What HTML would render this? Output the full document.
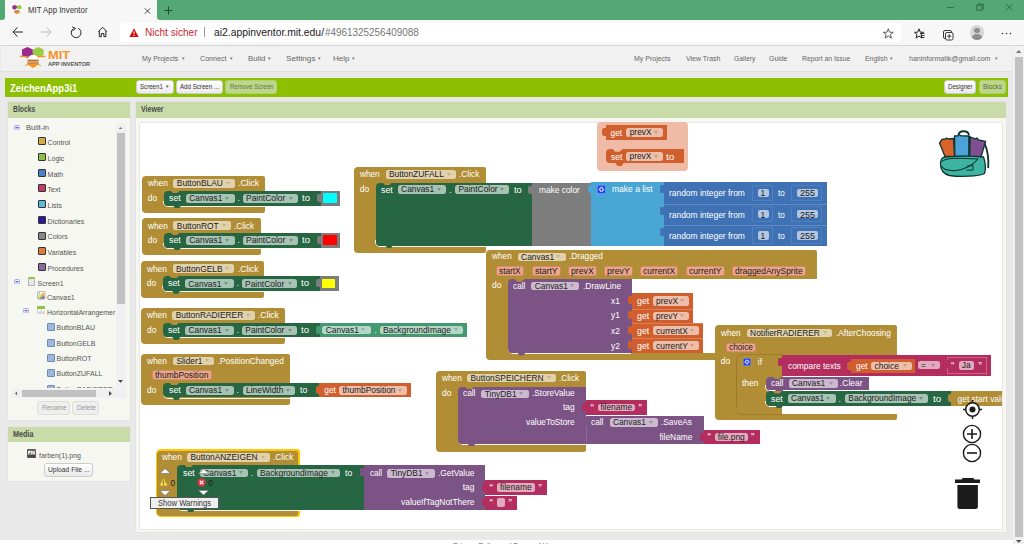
<!DOCTYPE html>
<html><head><meta charset="utf-8"><title>MIT App Inventor</title>
<style>
html,body{margin:0;padding:0;}
body{width:1024px;height:544px;overflow:hidden;position:relative;font-family:"Liberation Sans",sans-serif;background:#fff;}
body div, body svg{position:absolute;box-sizing:border-box;}
</style></head><body>
<div style="left:0;top:0;width:1024px;height:544px;background:#fff"></div>
<div style="left:0px;top:0px;width:1024px;height:45.5px;background:#f7f7f7;"></div>
<div style="left:0px;top:0px;width:5px;height:20px;background:#54a873;border-radius:0 0 3px 0;"></div>
<div style="left:157px;top:0px;width:867px;height:20px;background:#54a873;border-radius:0 0 0 3px;"></div>
<svg style="left:10.5px;top:4.3px;width:12px;height:11px" viewBox="0 0 28 23"><path d="M8.4 1 L13.8 3.6 L13.8 9.4 L8.4 12 L3 9.4 L3 3.6 Z" fill="#9a2a8c"/><path d="M19.3 1 L24.6 3.6 L24.6 9 L19.3 11.4 L14 9 L14 3.6 Z" fill="#9ccb45"/><path d="M9 13.6 Q9 9 14 9 Q19.4 9 19.4 13.6 Z" fill="#eee"/><rect x="8.5" y="13.6" width="11" height="4.3" fill="#a7754b"/><path d="M5 17.9 H23 L14 22.5 Z" fill="#f7931e"/></svg>
<div style="left:28.0px;top:4.6px;height:10.8px;line-height:10.8px;font-size:8.3px;color:#333;white-space:nowrap;transform:scaleX(0.944);transform-origin:0 50%;">MIT App Inventor</div>
<svg style="left:144px;top:7.5px;width:7px;height:6px" viewBox="0 0 7 6"><path d="M0.8 0.3 L6.2 5.7 M6.2 0.3 L0.8 5.7" stroke="#333" stroke-width="0.9"/></svg>
<svg style="left:163.5px;top:6px;width:9px;height:9px" viewBox="0 0 9 9"><path d="M4.5 0.5 V8.5 M0.5 4.5 H8.5" stroke="#1f4d2e" stroke-width="1"/></svg>
<svg style="left:940px;top:0px;width:80px;height:16px" viewBox="0 0 80 16"><path d="M7 7.4 H13.8" stroke="#2c6a41" stroke-width="0.9"/><rect x="36.8" y="5.2" width="5.2" height="5" fill="none" stroke="#2c6a41" stroke-width="0.9"/><path d="M38.2 5.2 V4 H43.2 V9 H42" fill="none" stroke="#2c6a41" stroke-width="0.9"/><path d="M66.2 4.2 L72.4 10.2 M72.4 4.2 L66.2 10.2" stroke="#2c6a41" stroke-width="0.9"/></svg>
<div style="left:120px;top:22.5px;width:781px;height:19.5px;background:#fff;border-radius:4px;"></div>
<div style="left:0px;top:44.75px;width:1024px;height:1.25px;background:#d4d4d4;"></div>
<svg style="left:10px;top:25px;width:100px;height:14px" viewBox="0 0 100 14"><path d="M3 7 H13 M7.5 2.3 L3 7 L7.5 11.7" fill="none" stroke="#222" stroke-width="1"/><path d="M31 7 H41 M36.5 2.3 L41 7 L36.5 11.7" fill="none" stroke="#bdbdbd" stroke-width="1"/><path d="M63.5 3.6 A4.9 4.9 0 1 0 68.2 3.3" fill="none" stroke="#222" stroke-width="1"/><path d="M62.2 1.8 L65.6 3.4 L62.6 5.8" fill="none" stroke="#222" stroke-width="1"/><path d="M88.3 6.6 L92.6 2.3 L96.9 6.6 M89.3 5.8 V11.7 H91.3 V8.6 H93.9 V11.7 H95.9 V5.8" fill="none" stroke="#222" stroke-width="1"/></svg>
<svg style="left:129px;top:27.5px;width:10px;height:9.5px" viewBox="0 0 10 9.5"><path d="M5 0.3 L9.8 9.3 H0.2 Z" fill="#d50b0b"/><rect x="4.5" y="3.3" width="1" height="3" fill="#fff"/><rect x="4.5" y="7" width="1" height="1" fill="#fff"/></svg>
<div style="left:145.0px;top:26.3px;height:13.0px;line-height:13.0px;font-size:10px;color:#c9262f;white-space:nowrap;transform:scaleX(1.005);transform-origin:0 50%;">Nicht sicher</div>
<div style="left:204px;top:27px;width:1px;height:10px;background:#999;"></div>
<div style="left:213.5px;top:26.3px;height:13.0px;line-height:13.0px;font-size:10px;color:#222;white-space:nowrap;transform:scaleX(1.036);transform-origin:0 50%;">ai2.appinventor.mit.edu/</div>
<div style="left:324.8px;top:26.3px;height:13.0px;line-height:13.0px;font-size:10px;color:#767676;white-space:nowrap;transform:scaleX(0.991);transform-origin:0 50%;">#4961325256409088</div>
<svg style="left:883px;top:27.5px;width:130px;height:13px" viewBox="0 0 130 13"><path d="M5.3 0.8 L6.6 4.2 L10.2 4.3 L7.4 6.6 L8.4 10.1 L5.3 8.1 L2.2 10.1 L3.2 6.6 L0.4 4.3 L4 4.2 Z" fill="none" stroke="#333" stroke-width="0.8" stroke-linejoin="round"/><path d="M36 0.8 L37.3 4.2 L40.5 4.3 L38 6.6 L39 10.1 L36 8.1 L33 10.1 L34 6.6 L31.5 4.3 L34.7 4.2 Z" fill="none" stroke="#222" stroke-width="1" stroke-linejoin="round"/><path d="M37 5.5 H41.5 M38 7.5 H41.5 M38.5 9.5 H41.5" stroke="#222" stroke-width="0.9"/><rect x="60.5" y="2.5" width="8" height="8" rx="1.5" fill="none" stroke="#222" stroke-width="0.9"/><rect x="62.5" y="4.5" width="7.5" height="7.5" rx="1.5" fill="#fff" stroke="#222" stroke-width="0.9"/><path d="M66.2 6 V10.5 M64 8.2 H68.4" stroke="#222" stroke-width="0.9"/><circle cx="119.5" cy="5.5" r="0.8" fill="#333"/><circle cx="123.5" cy="5.5" r="0.8" fill="#333"/><circle cx="127.5" cy="5.5" r="0.8" fill="#333"/></svg>
<div style="left:969.5px;top:25.4px;width:14.5px;height:14.5px;background:#d7d7d7;border-radius:50%;overflow:hidden"><div style="left:4.5px;top:2.5px;width:5.5px;height:5.5px;background:#8d8d8d;border-radius:50%"></div><div style="left:2.3px;top:8.6px;width:10px;height:7px;background:#8d8d8d;border-radius:50%"></div></div>
<div style="left:0px;top:46px;width:1013px;height:493.75px;background:#e9e9e9;"></div>
<div style="left:1013px;top:46px;width:11px;height:498px;background:#f1f1f1;"></div>
<div style="left:1014.5px;top:57px;width:8.5px;height:479.5px;background:#c1c1c1;"></div>
<svg style="left:1015.95px;top:49.50px;width:5.5px;height:3px" viewBox="0 0 5.5 3"><polygon points="0,3 2.75,0 5.5,3" fill="#777"/></svg>
<svg style="left:1015.95px;top:539.50px;width:5.5px;height:3px" viewBox="0 0 5.5 3"><polygon points="0,0 2.75,3 5.5,0" fill="#555"/></svg>
<div style="left:1px;top:46px;width:1011px;height:26px;background:#f1f1f1;border-bottom:1px solid #e0e0e0;"></div>
<svg style="left:19px;top:46px;width:28px;height:23px" viewBox="0 0 28 23"><path d="M8.4 1 L13.8 3.6 L13.8 9.4 L8.4 12 L3 9.4 L3 3.6 Z" fill="#9a2a8c"/><path d="M19.3 1 L24.6 3.6 L24.6 9 L19.3 11.4 L14 9 L14 3.6 Z" fill="#9ccb45"/><path d="M1 10.5 Q4 10 9 11 M18 11 Q23 10 26.5 10.5" stroke="#f7931e" stroke-width="1.3" fill="none"/><path d="M9 13.6 Q9 9 14 9 Q19.4 9 19.4 13.6 Z" fill="#fff"/><rect x="8.5" y="13.6" width="11" height="1.5" fill="#a7754b"/><rect x="8.5" y="15.1" width="11" height="1.3" fill="#f39a3c"/><rect x="8.5" y="16.4" width="11" height="1.5" fill="#a7754b"/><path d="M8.5 17.9 H19.5 L14 21.5 Z M6 20 L9 18 M22 20 L19 18" fill="#f7931e" stroke="#f7931e" stroke-width="1"/></svg>
<div style="left:47.8px;top:47.7px;height:14.7px;line-height:14.7px;font-size:11.3px;color:#f7931e;white-space:nowrap;font-weight:bold;transform:scaleX(1.141);transform-origin:0 50%;">MIT</div>
<div style="left:47.8px;top:60.2px;height:8.1px;line-height:8.1px;font-size:6.2px;color:#555;white-space:nowrap;font-weight:bold;transform:scaleX(0.912);transform-origin:0 50%;">APP INVENTOR</div>
<div style="left:141.6px;top:54.3px;height:9.4px;line-height:9.4px;font-size:7.2px;color:#666;white-space:nowrap;transform:scaleX(0.968);transform-origin:0 50%;">My Projects</div>
<div style="left:181.8px;top:56.1px;height:5.9px;line-height:5.9px;font-size:4.5px;color:#777;white-space:nowrap;">▾</div>
<div style="left:200.0px;top:54.3px;height:9.4px;line-height:9.4px;font-size:7.2px;color:#666;white-space:nowrap;transform:scaleX(0.988);transform-origin:0 50%;">Connect</div>
<div style="left:229.8px;top:56.1px;height:5.9px;line-height:5.9px;font-size:4.5px;color:#777;white-space:nowrap;">▾</div>
<div style="left:247.5px;top:54.3px;height:9.4px;line-height:9.4px;font-size:7.2px;color:#666;white-space:nowrap;transform:scaleX(1.093);transform-origin:0 50%;">Build</div>
<div style="left:268.3px;top:56.1px;height:5.9px;line-height:5.9px;font-size:4.5px;color:#777;white-space:nowrap;">▾</div>
<div style="left:285.5px;top:54.3px;height:9.4px;line-height:9.4px;font-size:7.2px;color:#666;white-space:nowrap;transform:scaleX(1.134);transform-origin:0 50%;">Settings</div>
<div style="left:318.3px;top:56.1px;height:5.9px;line-height:5.9px;font-size:4.5px;color:#777;white-space:nowrap;">▾</div>
<div style="left:332.5px;top:54.3px;height:9.4px;line-height:9.4px;font-size:7.2px;color:#666;white-space:nowrap;transform:scaleX(1.114);transform-origin:0 50%;">Help</div>
<div style="left:352.3px;top:56.1px;height:5.9px;line-height:5.9px;font-size:4.5px;color:#777;white-space:nowrap;">▾</div>
<div style="left:634.0px;top:53.8px;height:9.4px;line-height:9.4px;font-size:7.2px;color:#666;white-space:nowrap;transform:scaleX(0.973);transform-origin:0 50%;">My Projects</div>
<div style="left:685.5px;top:53.8px;height:9.4px;line-height:9.4px;font-size:7.2px;color:#666;white-space:nowrap;transform:scaleX(0.972);transform-origin:0 50%;">View Trash</div>
<div style="left:733.5px;top:53.8px;height:9.4px;line-height:9.4px;font-size:7.2px;color:#666;white-space:nowrap;transform:scaleX(0.943);transform-origin:0 50%;">Gallery</div>
<div style="left:769.0px;top:53.8px;height:9.4px;line-height:9.4px;font-size:7.2px;color:#666;white-space:nowrap;transform:scaleX(0.963);transform-origin:0 50%;">Guide</div>
<div style="left:801.6px;top:53.8px;height:9.4px;line-height:9.4px;font-size:7.2px;color:#666;white-space:nowrap;transform:scaleX(0.952);transform-origin:0 50%;">Report an Issue</div>
<div style="left:864.5px;top:54.3px;height:9.4px;line-height:9.4px;font-size:7.2px;color:#666;white-space:nowrap;transform:scaleX(0.953);transform-origin:0 50%;">English</div>
<div style="left:890.3px;top:56.1px;height:5.9px;line-height:5.9px;font-size:4.5px;color:#777;white-space:nowrap;">▾</div>
<div style="left:909.4px;top:54.3px;height:9.4px;line-height:9.4px;font-size:7.2px;color:#666;white-space:nowrap;transform:scaleX(0.979);transform-origin:0 50%;">haninformatik@gmail.com</div>
<div style="left:994.8px;top:56.1px;height:5.9px;line-height:5.9px;font-size:4.5px;color:#777;white-space:nowrap;">▾</div>
<div style="left:4.5px;top:78px;width:1003.5px;height:18.5px;background:#8cc000;"></div>
<div style="left:9.6px;top:81.5px;height:13.7px;line-height:13.7px;font-size:10.5px;color:#fff;white-space:nowrap;font-weight:bold;transform:scaleX(0.901);transform-origin:0 50%;">ZeichenApp3i1</div>
<div style="left:135.7px;top:80.2px;width:38.10000000000002px;height:14.099999999999994px;background:linear-gradient(#fff,#eaeaea);border-radius:3px;box-sizing:border-box;border:1px solid #ccc"></div>
<div style="left:139.8px;top:82.2px;height:9.1px;line-height:9.1px;font-size:7px;color:#333;white-space:nowrap;transform:scaleX(0.875);transform-origin:0 50%;">Screen1</div>
<div style="left:165.8px;top:83.9px;height:5.9px;line-height:5.9px;font-size:4.5px;color:#555;white-space:nowrap;">▾</div>
<div style="left:176px;top:80.2px;width:47px;height:14.099999999999994px;background:linear-gradient(#fff,#eaeaea);border-radius:3px;box-sizing:border-box;border:1px solid #ccc"></div>
<div style="left:180.0px;top:82.2px;height:9.1px;line-height:9.1px;font-size:7px;color:#333;white-space:nowrap;transform:scaleX(0.879);transform-origin:0 50%;">Add Screen ...</div>
<div style="left:225px;top:80.2px;width:52px;height:14.099999999999994px;background:#bcd68a;border-radius:3px;box-sizing:border-box;border:1px solid #b2cd7c"></div>
<div style="left:229.6px;top:82.2px;height:9.1px;line-height:9.1px;font-size:7px;color:#637449;white-space:nowrap;transform:scaleX(0.865);transform-origin:0 50%;">Remove Screen</div>
<div style="left:943.5px;top:80px;width:32.5px;height:14px;background:linear-gradient(#fff,#eaeaea);border-radius:3px;box-sizing:border-box;border:1px solid #ccc"></div>
<div style="left:947.5px;top:82.0px;height:9.1px;line-height:9.1px;font-size:7px;color:#333;white-space:nowrap;transform:scaleX(0.875);transform-origin:0 50%;">Designer</div>
<div style="left:979px;top:80px;width:27px;height:14px;background:#bcd68a;border-radius:3px;box-sizing:border-box;border:1px solid #b2cd7c"></div>
<div style="left:983.0px;top:82.0px;height:9.1px;line-height:9.1px;font-size:7px;color:#5b6b44;white-space:nowrap;transform:scaleX(0.922);transform-origin:0 50%;">Blocks</div>
<div style="left:7.5px;top:101.5px;width:122.5px;height:318.5px;background:#f6f7f0;box-shadow:0 0 1px #ccc;"></div>
<div style="left:7.5px;top:101.5px;width:122.5px;height:16.5px;background:#c9dba9;"></div>
<div style="left:12.9px;top:103.8px;height:11.2px;line-height:11.2px;font-size:8.6px;color:#4a4a4a;white-space:nowrap;font-weight:bold;transform:scaleX(0.787);transform-origin:0 50%;">Blocks</div>
<svg style="left:14.2px;top:124.8px;width:6px;height:5.5px" viewBox="0 0 6 5.5"><rect x="0.5" y="0.5" width="5" height="4.5" rx="1.3" fill="#f3f3ff" stroke="#a2a2dc" stroke-width="0.9"/><path d="M1.6 2.75 H4.4" stroke="#3535c8" stroke-width="1"/></svg>
<div style="left:25.9px;top:123.0px;height:9.6px;line-height:9.6px;font-size:7.4px;color:#555;white-space:nowrap;transform:scaleX(1.021);transform-origin:0 50%;">Built-in</div>
<div style="left:37.6px;top:137.3px;width:8px;height:8px;background:#d4ac45;border:1px solid #333;border-radius:1px"></div>
<div style="left:47.6px;top:138.2px;height:9.1px;line-height:9.1px;font-size:7px;color:#555;white-space:nowrap;">Control</div>
<div style="left:37.6px;top:153.0px;width:8px;height:8px;background:#8bbf4b;border:1px solid #333;border-radius:1px"></div>
<div style="left:47.6px;top:153.9px;height:9.1px;line-height:9.1px;font-size:7px;color:#555;white-space:nowrap;">Logic</div>
<div style="left:37.6px;top:168.7px;width:8px;height:8px;background:#4a80c8;border:1px solid #333;border-radius:1px"></div>
<div style="left:47.6px;top:169.7px;height:9.1px;line-height:9.1px;font-size:7px;color:#555;white-space:nowrap;">Math</div>
<div style="left:37.6px;top:184.4px;width:8px;height:8px;background:#c03a6a;border:1px solid #333;border-radius:1px"></div>
<div style="left:47.6px;top:185.3px;height:9.1px;line-height:9.1px;font-size:7px;color:#555;white-space:nowrap;">Text</div>
<div style="left:37.6px;top:200.1px;width:8px;height:8px;background:#5ab8e0;border:1px solid #333;border-radius:1px"></div>
<div style="left:47.6px;top:201.1px;height:9.1px;line-height:9.1px;font-size:7px;color:#555;white-space:nowrap;">Lists</div>
<div style="left:37.6px;top:215.8px;width:8px;height:8px;background:#2b1a9c;border:1px solid #333;border-radius:1px"></div>
<div style="left:47.6px;top:216.8px;height:9.1px;line-height:9.1px;font-size:7px;color:#555;white-space:nowrap;">Dictionaries</div>
<div style="left:37.6px;top:231.5px;width:8px;height:8px;background:#888888;border:1px solid #333;border-radius:1px"></div>
<div style="left:47.6px;top:232.4px;height:9.1px;line-height:9.1px;font-size:7px;color:#555;white-space:nowrap;">Colors</div>
<div style="left:37.6px;top:247.2px;width:8px;height:8px;background:#e07a3a;border:1px solid #333;border-radius:1px"></div>
<div style="left:47.6px;top:248.1px;height:9.1px;line-height:9.1px;font-size:7px;color:#555;white-space:nowrap;">Variables</div>
<div style="left:37.6px;top:262.9px;width:8px;height:8px;background:#8b66a0;border:1px solid #333;border-radius:1px"></div>
<div style="left:47.6px;top:263.8px;height:9.1px;line-height:9.1px;font-size:7px;color:#555;white-space:nowrap;">Procedures</div>
<div style="left:115.5px;top:123px;width:10.25px;height:265px;background:#f0f0f0;"></div>
<div style="left:116.5px;top:133px;width:8.5px;height:171px;background:#c1c1c1;"></div>
<svg style="left:118.30px;top:126.60px;width:5px;height:2.8px" viewBox="0 0 5 2.8"><polygon points="0,2.8 2.5,0 5,2.8" fill="#777"/></svg>
<svg style="left:118.30px;top:380.40px;width:5px;height:2.8px" viewBox="0 0 5 2.8"><polygon points="0,0 2.5,2.8 5,0" fill="#444"/></svg>
<svg style="left:14px;top:278.9px;width:6px;height:5.5px" viewBox="0 0 6 5.5"><rect x="0.5" y="0.5" width="5" height="4.5" rx="1.3" fill="#f3f3ff" stroke="#a2a2dc" stroke-width="0.9"/><path d="M1.6 2.75 H4.4" stroke="#3535c8" stroke-width="1"/></svg>
<div style="left:28.25px;top:276.75px;width:6.75px;height:9px;background:#e8e8e8;border:1px solid #b5b5b5;box-sizing:border-box;border-top:2px solid #8cc63f;border-radius:1px"></div>
<div style="left:37.5px;top:278.9px;height:9.1px;line-height:9.1px;font-size:7px;color:#555;white-space:nowrap;">Screen1</div>
<svg style="left:37.3px;top:291.4px;width:8.3px;height:8.5px" viewBox="0 0 8.3 8.5"><rect x="0.4" y="0.4" width="7.5" height="7.7" rx="1" fill="#fff" stroke="#9aa" stroke-width="0.8"/><path d="M1 7.5 C3 7 3 2 7.5 1.5 V7.5 Z" fill="#f3b54a"/><path d="M1 7.8 C4 7.5 5 5.5 7.5 5 V7.8 Z" fill="#4a7fc8"/><path d="M2.5 1 C2.5 3 2 5 1.2 6.5" stroke="#8cc63f" stroke-width="0.9" fill="none"/></svg>
<div style="left:47.0px;top:293.1px;height:9.1px;line-height:9.1px;font-size:7px;color:#555;white-space:nowrap;">Canvas1</div>
<svg style="left:23.3px;top:307.8px;width:6px;height:5.5px" viewBox="0 0 6 5.5"><rect x="0.5" y="0.5" width="5" height="4.5" rx="1.3" fill="#f3f3ff" stroke="#a2a2dc" stroke-width="0.9"/><path d="M1.6 2.75 H4.4" stroke="#3535c8" stroke-width="1"/></svg>
<svg style="left:36.5px;top:306.2px;width:8.7px;height:8.3px" viewBox="0 0 8.7 8.3"><rect x="0" y="0" width="8.7" height="8.3" rx="1" fill="#d8d8d8"/><rect x="0" y="0" width="8.7" height="3.6" rx="1" fill="#8cc63f"/><rect x="1.2" y="3" width="2.6" height="2.4" fill="#fff"/><rect x="4.9" y="3" width="2.6" height="2.4" fill="#fff"/></svg>
<div style="left:46.5px;top:307.6px;height:9.1px;line-height:9.1px;font-size:7px;color:#555;white-space:nowrap;transform:scaleX(0.996);transform-origin:0 50%;">HorizontalArrangemer</div>
<div style="left:46.5px;top:323px;width:8.25px;height:8px;background:#9db8db;border:1px solid #6a8bb8;box-sizing:border-box;border-radius:1px"></div>
<div style="left:56.5px;top:323.2px;height:9.1px;line-height:9.1px;font-size:7px;color:#555;white-space:nowrap;">ButtonBLAU</div>
<div style="left:46.5px;top:338.5px;width:8.25px;height:8px;background:#9db8db;border:1px solid #6a8bb8;box-sizing:border-box;border-radius:1px"></div>
<div style="left:56.5px;top:338.6px;height:9.1px;line-height:9.1px;font-size:7px;color:#555;white-space:nowrap;">ButtonGELB</div>
<div style="left:46.5px;top:353.75px;width:8.25px;height:8px;background:#9db8db;border:1px solid #6a8bb8;box-sizing:border-box;border-radius:1px"></div>
<div style="left:56.5px;top:354.1px;height:9.1px;line-height:9.1px;font-size:7px;color:#555;white-space:nowrap;">ButtonROT</div>
<div style="left:46.5px;top:369.25px;width:8.25px;height:8px;background:#9db8db;border:1px solid #6a8bb8;box-sizing:border-box;border-radius:1px"></div>
<div style="left:56.5px;top:369.4px;height:9.1px;line-height:9.1px;font-size:7px;color:#555;white-space:nowrap;">ButtonZUFALL</div>
<div style="left:40px;top:378px;width:75px;height:9.6px;overflow:hidden">
<div style="left:-40px;top:-378px;width:200px;height:400px">
<div style="left:46.5px;top:384.5px;width:8.25px;height:8px;background:#9db8db;border:1px solid #6a8bb8;box-sizing:border-box;border-radius:1px"></div>
<div style="left:56.5px;top:384.8px;height:9.1px;line-height:9.1px;font-size:7px;color:#555;white-space:nowrap;">ButtonRADIERER</div>
</div></div>
<div style="left:11px;top:388.5px;width:115px;height:9.5px;background:#f0f0f0;"></div>
<div style="left:22px;top:389.5px;width:73.5px;height:7.5px;background:#c1c1c1;"></div>
<svg style="left:14.60px;top:390.80px;width:2.8px;height:5px" viewBox="0 0 2.8 5"><polygon points="2.8,0 0,2.5 2.8,5" fill="#555"/></svg>
<svg style="left:108.90px;top:390.80px;width:2.8px;height:5px" viewBox="0 0 2.8 5"><polygon points="0,0 2.8,2.5 0,5" fill="#444"/></svg>
<div style="left:37.4px;top:401px;width:32.6px;height:13.699999999999989px;background:#efefef;border-radius:3px;box-sizing:border-box;border:1px solid #ddd"></div>
<div style="left:41.5px;top:402.8px;height:9.1px;line-height:9.1px;font-size:7px;color:#999;white-space:nowrap;transform:scaleX(0.926);transform-origin:0 50%;">Rename</div>
<div style="left:72.4px;top:401px;width:27.0px;height:13.699999999999989px;background:#efefef;border-radius:3px;box-sizing:border-box;border:1px solid #ddd"></div>
<div style="left:76.5px;top:402.8px;height:9.1px;line-height:9.1px;font-size:7px;color:#999;white-space:nowrap;transform:scaleX(0.939);transform-origin:0 50%;">Delete</div>
<div style="left:8px;top:426.5px;width:122px;height:54px;background:#f6f7f0;box-shadow:0 0 1px #ccc;"></div>
<div style="left:8px;top:426.5px;width:122px;height:15.75px;background:#c9dba9;"></div>
<div style="left:12.8px;top:429.0px;height:11.2px;line-height:11.2px;font-size:8.6px;color:#4a4a4a;white-space:nowrap;font-weight:bold;transform:scaleX(0.845);transform-origin:0 50%;">Media</div>
<svg style="left:27.4px;top:448.5px;width:9.1px;height:9.1px" viewBox="0 0 9 9"><rect x="0" y="0" width="9" height="9" rx="1" fill="#555"/><rect x="0.8" y="0.8" width="7.4" height="7.4" fill="#777"/><path d="M1.2 2 H3.6 V3.8 H2.2 V5.5 H1.2 Z M4.2 2 H5 L6.5 4 V2 H7.6 V5.5 H6.8 L5.2 3.5 V5.5 H4.2 Z" fill="#fff"/><rect x="0.8" y="6" width="7.4" height="2.2" fill="#444"/></svg>
<div style="left:39.0px;top:450.9px;height:9.4px;line-height:9.4px;font-size:7.2px;color:#555;white-space:nowrap;transform:scaleX(0.972);transform-origin:0 50%;">farben(1).png</div>
<div style="left:43.8px;top:463.3px;width:49.2px;height:13.699999999999989px;background:linear-gradient(#fff,#eaeaea);border-radius:3px;box-sizing:border-box;border:1px solid #ccc"></div>
<div style="left:47.8px;top:465.1px;height:9.1px;line-height:9.1px;font-size:7px;color:#333;white-space:nowrap;transform:scaleX(0.961);transform-origin:0 50%;">Upload File ...</div>
<div style="left:135.5px;top:101.5px;width:870px;height:430.75px;background:#f6f7f0;box-shadow:0 0 1px #ccc;"></div>
<div style="left:135.5px;top:101.5px;width:870px;height:16.5px;background:#c9dba9;"></div>
<div style="left:140.7px;top:103.8px;height:11.2px;line-height:11.2px;font-size:8.6px;color:#4a4a4a;white-space:nowrap;font-weight:bold;transform:scaleX(0.820);transform-origin:0 50%;">Viewer</div>
<div style="left:139.5px;top:122.5px;width:862px;height:406px;background:#fff;box-shadow:0 0 0 0.7px #e3e3de;"></div>
<div style="left:452.5px;top:541.4px;height:10.4px;line-height:10.4px;font-size:8px;color:#666;white-space:nowrap;transform:scaleX(0.895);transform-origin:0 50%;">Privacy Policy and Terms of Use</div>
<div style="left:139px;top:122px;width:863px;height:406px;overflow:hidden">
<div style="left:-139px;top:-122px;width:1024px;height:544px;">
<div style="left:142px;top:175.5px;width:122.75px;height:15.5px;background:#b18e35;border-radius:4px 2px 0 0;"></div>
<div style="left:142px;top:190.5px;width:25.5px;height:15.5px;background:#b18e35;"></div>
<div style="left:142px;top:205.5px;width:122.75px;height:7.25px;background:#b18e35;border-radius:0 0 2px 4px;"></div>
<div style="left:147.8px;top:177.9px;height:10.9px;line-height:10.9px;font-size:8.4px;color:#fff;white-space:nowrap;transform:scaleX(0.991);transform-origin:0 50%;">when</div>
<div style="left:173.25px;top:178.5px;width:61.5px;height:9px;background:#e0d2ae;border-radius:2.5px;"></div>
<div style="left:176.8px;top:177.8px;height:10.9px;line-height:10.9px;font-size:8.4px;color:#222;white-space:nowrap;">ButtonBLAU</div>
<div style="left:225.8px;top:181.5px;width:0;height:0;border-left:2px solid transparent;border-right:2px solid transparent;border-top:3px solid #b18e35;opacity:.45"></div>
<div style="left:237.9px;top:177.9px;height:10.9px;line-height:10.9px;font-size:8.4px;color:#fff;white-space:nowrap;transform:scaleX(1.028);transform-origin:0 50%;">.Click</div>
<div style="left:147.8px;top:192.5px;height:10.9px;line-height:10.9px;font-size:8.4px;color:#fff;white-space:nowrap;">do</div>
<div style="left:163.3px;top:200.5px;width:157.2px;height:6.3px;border-left:1px solid rgba(255,255,255,.85);border-bottom:1.2px solid rgba(255,255,255,.9);border-bottom-left-radius:5px;"></div>
<div style="left:163.5px;top:190.5px;width:157px;height:15px;background:#266643;border-radius:4px 0 0 4px;"></div>
<div style="left:170.1px;top:190.3px;width:10px;height:2.6px;background:#b18e35;clip-path:polygon(0 0,100% 0,72% 100%,28% 100%)"></div>
<div style="left:173.1px;top:205.2px;width:8px;height:3px;background:#266643;clip-path:polygon(0 0,100% 0,75% 100%,25% 100%)"></div>
<div style="left:169.2px;top:192.7px;height:10.9px;line-height:10.9px;font-size:8.4px;color:#fff;white-space:nowrap;transform:scaleX(1.053);transform-origin:0 50%;">set</div>
<div style="left:185.75px;top:193.5px;width:48.75px;height:9.25px;background:#a8c2b4;border-radius:2.5px;"></div>
<div style="left:189.3px;top:193.0px;height:10.9px;line-height:10.9px;font-size:8.4px;color:#222;white-space:nowrap;">Canvas1</div>
<div style="left:225.4px;top:196.7px;width:0;height:0;border-left:2px solid transparent;border-right:2px solid transparent;border-top:3px solid #266643;opacity:.45"></div>
<div style="left:237.6px;top:192.7px;height:10.9px;line-height:10.9px;font-size:8.4px;color:#fff;white-space:nowrap;">.</div>
<div style="left:242.5px;top:193.5px;width:55px;height:9.25px;background:#a8c2b4;border-radius:2.5px;"></div>
<div style="left:246.1px;top:193.0px;height:10.9px;line-height:10.9px;font-size:8.4px;color:#222;white-space:nowrap;">PaintColor</div>
<div style="left:288.6px;top:196.7px;width:0;height:0;border-left:2px solid transparent;border-right:2px solid transparent;border-top:3px solid #266643;opacity:.45"></div>
<div style="left:302.0px;top:192.7px;height:10.9px;line-height:10.9px;font-size:8.4px;color:#fff;white-space:nowrap;transform:scaleX(1.142);transform-origin:0 50%;">to</div>
<div style="left:320.5px;top:190.5px;width:19.5px;height:15px;background:#7d7d7d;"></div>
<div style="left:317.0px;top:193.5px;width:4px;height:8px;background:#7d7d7d;border-radius:2px 0 0 2px;"></div>
<div style="left:323.25px;top:193.25px;width:13.25px;height:9.5px;background:#00ffff;border-radius:0.5px"></div>
<div style="left:142px;top:218.25px;width:118.5px;height:14.75px;background:#b18e35;border-radius:4px 2px 0 0;"></div>
<div style="left:142px;top:232.5px;width:25.5px;height:15.5px;background:#b18e35;"></div>
<div style="left:142px;top:247.5px;width:118.5px;height:7.25px;background:#b18e35;border-radius:0 0 2px 4px;"></div>
<div style="left:147.8px;top:220.6px;height:10.9px;line-height:10.9px;font-size:8.4px;color:#fff;white-space:nowrap;transform:scaleX(0.991);transform-origin:0 50%;">when</div>
<div style="left:173.25px;top:221.25px;width:57.75px;height:8.75px;background:#e0d2ae;border-radius:2.5px;"></div>
<div style="left:176.8px;top:220.5px;height:10.9px;line-height:10.9px;font-size:8.4px;color:#222;white-space:nowrap;">ButtonROT</div>
<div style="left:221.9px;top:224.2px;width:0;height:0;border-left:2px solid transparent;border-right:2px solid transparent;border-top:3px solid #b18e35;opacity:.45"></div>
<div style="left:234.4px;top:220.6px;height:10.9px;line-height:10.9px;font-size:8.4px;color:#fff;white-space:nowrap;transform:scaleX(0.979);transform-origin:0 50%;">.Click</div>
<div style="left:147.8px;top:234.5px;height:10.9px;line-height:10.9px;font-size:8.4px;color:#fff;white-space:nowrap;">do</div>
<div style="left:163.3px;top:242.5px;width:157.2px;height:6.3px;border-left:1px solid rgba(255,255,255,.85);border-bottom:1.2px solid rgba(255,255,255,.9);border-bottom-left-radius:5px;"></div>
<div style="left:163.5px;top:232.5px;width:157px;height:15px;background:#266643;border-radius:4px 0 0 4px;"></div>
<div style="left:170.1px;top:232.3px;width:10px;height:2.6px;background:#b18e35;clip-path:polygon(0 0,100% 0,72% 100%,28% 100%)"></div>
<div style="left:173.1px;top:247.2px;width:8px;height:3px;background:#266643;clip-path:polygon(0 0,100% 0,75% 100%,25% 100%)"></div>
<div style="left:169.2px;top:234.7px;height:10.9px;line-height:10.9px;font-size:8.4px;color:#fff;white-space:nowrap;transform:scaleX(1.053);transform-origin:0 50%;">set</div>
<div style="left:185.75px;top:235.5px;width:48.75px;height:9.25px;background:#a8c2b4;border-radius:2.5px;"></div>
<div style="left:189.3px;top:235.0px;height:10.9px;line-height:10.9px;font-size:8.4px;color:#222;white-space:nowrap;">Canvas1</div>
<div style="left:225.4px;top:238.7px;width:0;height:0;border-left:2px solid transparent;border-right:2px solid transparent;border-top:3px solid #266643;opacity:.45"></div>
<div style="left:237.6px;top:234.7px;height:10.9px;line-height:10.9px;font-size:8.4px;color:#fff;white-space:nowrap;">.</div>
<div style="left:242.5px;top:235.5px;width:55px;height:9.25px;background:#a8c2b4;border-radius:2.5px;"></div>
<div style="left:246.1px;top:235.0px;height:10.9px;line-height:10.9px;font-size:8.4px;color:#222;white-space:nowrap;">PaintColor</div>
<div style="left:288.6px;top:238.7px;width:0;height:0;border-left:2px solid transparent;border-right:2px solid transparent;border-top:3px solid #266643;opacity:.45"></div>
<div style="left:302.0px;top:234.7px;height:10.9px;line-height:10.9px;font-size:8.4px;color:#fff;white-space:nowrap;transform:scaleX(1.142);transform-origin:0 50%;">to</div>
<div style="left:320.5px;top:232.5px;width:19.5px;height:15px;background:#7d7d7d;"></div>
<div style="left:317.0px;top:235.5px;width:4px;height:8px;background:#7d7d7d;border-radius:2px 0 0 2px;"></div>
<div style="left:323.25px;top:235.25px;width:13.25px;height:9.5px;background:#ff0000;border-radius:0.5px"></div>
<div style="left:141px;top:261.25px;width:123px;height:15.25px;background:#b18e35;border-radius:4px 2px 0 0;"></div>
<div style="left:141px;top:276px;width:25.5px;height:15.5px;background:#b18e35;"></div>
<div style="left:141px;top:291px;width:123px;height:6.75px;background:#b18e35;border-radius:0 0 2px 4px;"></div>
<div style="left:146.8px;top:263.6px;height:10.9px;line-height:10.9px;font-size:8.4px;color:#fff;white-space:nowrap;transform:scaleX(0.991);transform-origin:0 50%;">when</div>
<div style="left:172.5px;top:264.25px;width:61.5px;height:8.75px;background:#e0d2ae;border-radius:2.5px;"></div>
<div style="left:176.0px;top:263.5px;height:10.9px;line-height:10.9px;font-size:8.4px;color:#222;white-space:nowrap;">ButtonGELB</div>
<div style="left:225.0px;top:267.2px;width:0;height:0;border-left:2px solid transparent;border-right:2px solid transparent;border-top:3px solid #b18e35;opacity:.45"></div>
<div style="left:237.5px;top:263.6px;height:10.9px;line-height:10.9px;font-size:8.4px;color:#fff;white-space:nowrap;transform:scaleX(0.998);transform-origin:0 50%;">.Click</div>
<div style="left:146.8px;top:278.0px;height:10.9px;line-height:10.9px;font-size:8.4px;color:#fff;white-space:nowrap;">do</div>
<div style="left:162.3px;top:286.0px;width:157.2px;height:6.3px;border-left:1px solid rgba(255,255,255,.85);border-bottom:1.2px solid rgba(255,255,255,.9);border-bottom-left-radius:5px;"></div>
<div style="left:162.5px;top:276px;width:157px;height:15px;background:#266643;border-radius:4px 0 0 4px;"></div>
<div style="left:169.1px;top:275.8px;width:10px;height:2.6px;background:#b18e35;clip-path:polygon(0 0,100% 0,72% 100%,28% 100%)"></div>
<div style="left:172.1px;top:290.7px;width:8px;height:3px;background:#266643;clip-path:polygon(0 0,100% 0,75% 100%,25% 100%)"></div>
<div style="left:168.2px;top:278.2px;height:10.9px;line-height:10.9px;font-size:8.4px;color:#fff;white-space:nowrap;transform:scaleX(1.053);transform-origin:0 50%;">set</div>
<div style="left:184.75px;top:279px;width:48.75px;height:9.25px;background:#a8c2b4;border-radius:2.5px;"></div>
<div style="left:188.3px;top:278.5px;height:10.9px;line-height:10.9px;font-size:8.4px;color:#222;white-space:nowrap;">Canvas1</div>
<div style="left:224.4px;top:282.2px;width:0;height:0;border-left:2px solid transparent;border-right:2px solid transparent;border-top:3px solid #266643;opacity:.45"></div>
<div style="left:236.6px;top:278.2px;height:10.9px;line-height:10.9px;font-size:8.4px;color:#fff;white-space:nowrap;">.</div>
<div style="left:241.5px;top:279px;width:55px;height:9.25px;background:#a8c2b4;border-radius:2.5px;"></div>
<div style="left:245.1px;top:278.5px;height:10.9px;line-height:10.9px;font-size:8.4px;color:#222;white-space:nowrap;">PaintColor</div>
<div style="left:287.6px;top:282.2px;width:0;height:0;border-left:2px solid transparent;border-right:2px solid transparent;border-top:3px solid #266643;opacity:.45"></div>
<div style="left:301.0px;top:278.2px;height:10.9px;line-height:10.9px;font-size:8.4px;color:#fff;white-space:nowrap;transform:scaleX(1.142);transform-origin:0 50%;">to</div>
<div style="left:319.5px;top:276px;width:19px;height:15px;background:#7d7d7d;"></div>
<div style="left:316.0px;top:279.0px;width:4px;height:8px;background:#7d7d7d;border-radius:2px 0 0 2px;"></div>
<div style="left:322.25px;top:278.75px;width:12.75px;height:9.5px;background:#ffff00;border-radius:0.5px"></div>
<div style="left:141.25px;top:307.5px;width:143.75px;height:15.5px;background:#b18e35;border-radius:4px 2px 0 0;"></div>
<div style="left:141.25px;top:322.5px;width:25.5px;height:15.25px;background:#b18e35;"></div>
<div style="left:141.25px;top:337.25px;width:143.75px;height:7px;background:#b18e35;border-radius:0 0 2px 4px;"></div>
<div style="left:147.0px;top:310.0px;height:10.9px;line-height:10.9px;font-size:8.4px;color:#fff;white-space:nowrap;transform:scaleX(0.991);transform-origin:0 50%;">when</div>
<div style="left:172.25px;top:310.75px;width:82.75px;height:8.75px;background:#e0d2ae;border-radius:2.5px;"></div>
<div style="left:175.7px;top:309.9px;height:10.9px;line-height:10.9px;font-size:8.4px;color:#222;white-space:nowrap;">ButtonRADIERER</div>
<div style="left:245.9px;top:313.6px;width:0;height:0;border-left:2px solid transparent;border-right:2px solid transparent;border-top:3px solid #b18e35;opacity:.45"></div>
<div style="left:258.2px;top:310.0px;height:10.9px;line-height:10.9px;font-size:8.4px;color:#fff;white-space:nowrap;transform:scaleX(1.018);transform-origin:0 50%;">.Click</div>
<div style="left:147.0px;top:324.6px;height:10.9px;line-height:10.9px;font-size:8.4px;color:#fff;white-space:nowrap;">do</div>
<div style="left:162.5px;top:332.2px;width:157.0px;height:6.3px;border-left:1px solid rgba(255,255,255,.85);border-bottom:1.2px solid rgba(255,255,255,.9);border-bottom-left-radius:5px;"></div>
<div style="left:162.75px;top:322.5px;width:156.75px;height:14.75px;background:#266643;border-radius:4px 0 0 4px;"></div>
<div style="left:169.3px;top:322.4px;width:10px;height:2.6px;background:#b18e35;clip-path:polygon(0 0,100% 0,72% 100%,28% 100%)"></div>
<div style="left:172.3px;top:336.9px;width:8px;height:3px;background:#266643;clip-path:polygon(0 0,100% 0,75% 100%,25% 100%)"></div>
<div style="left:168.4px;top:324.8px;height:10.9px;line-height:10.9px;font-size:8.4px;color:#fff;white-space:nowrap;transform:scaleX(1.053);transform-origin:0 50%;">set</div>
<div style="left:185px;top:325.75px;width:48.5px;height:9.25px;background:#a8c2b4;border-radius:2.5px;"></div>
<div style="left:188.5px;top:325.1px;height:10.9px;line-height:10.9px;font-size:8.4px;color:#222;white-space:nowrap;">Canvas1</div>
<div style="left:224.6px;top:328.8px;width:0;height:0;border-left:2px solid transparent;border-right:2px solid transparent;border-top:3px solid #266643;opacity:.45"></div>
<div style="left:236.8px;top:324.8px;height:10.9px;line-height:10.9px;font-size:8.4px;color:#fff;white-space:nowrap;">.</div>
<div style="left:241.75px;top:325.75px;width:55px;height:9.25px;background:#a8c2b4;border-radius:2.5px;"></div>
<div style="left:245.3px;top:325.1px;height:10.9px;line-height:10.9px;font-size:8.4px;color:#222;white-space:nowrap;">PaintColor</div>
<div style="left:287.8px;top:328.8px;width:0;height:0;border-left:2px solid transparent;border-right:2px solid transparent;border-top:3px solid #266643;opacity:.45"></div>
<div style="left:301.2px;top:324.8px;height:10.9px;line-height:10.9px;font-size:8.4px;color:#fff;white-space:nowrap;transform:scaleX(1.142);transform-origin:0 50%;">to</div>
<div style="left:319.5px;top:322.5px;width:147.25px;height:14.75px;background:#439970;"></div>
<div style="left:316.0px;top:325.6px;width:4px;height:8px;background:#439970;border-radius:2px 0 0 2px;"></div>
<div style="left:322.25px;top:325.5px;width:48.25px;height:8.75px;background:#b4d6c6;border-radius:2.5px;"></div>
<div style="left:325.8px;top:324.7px;height:10.9px;line-height:10.9px;font-size:8.4px;color:#222;white-space:nowrap;">Canvas1</div>
<div style="left:361.4px;top:328.4px;width:0;height:0;border-left:2px solid transparent;border-right:2px solid transparent;border-top:3px solid #439970;opacity:.45"></div>
<div style="left:374.5px;top:325.1px;height:10.9px;line-height:10.9px;font-size:8.4px;color:#fff;white-space:nowrap;">.</div>
<div style="left:379.5px;top:325.5px;width:83.25px;height:8.75px;background:#b4d6c6;border-radius:2.5px;"></div>
<div style="left:382.9px;top:324.7px;height:10.9px;line-height:10.9px;font-size:8.4px;color:#222;white-space:nowrap;">BackgroundImage</div>
<div style="left:453.7px;top:328.4px;width:0;height:0;border-left:2px solid transparent;border-right:2px solid transparent;border-top:3px solid #439970;opacity:.45"></div>
<div style="left:141.25px;top:353.75px;width:148.75px;height:29px;background:#b18e35;border-radius:4px 2px 0 0;"></div>
<div style="left:141.25px;top:382.5px;width:25.5px;height:15.25px;background:#b18e35;"></div>
<div style="left:141.25px;top:397.25px;width:148.75px;height:7.25px;background:#b18e35;border-radius:0 0 2px 4px;"></div>
<div style="left:147.0px;top:356.0px;height:10.9px;line-height:10.9px;font-size:8.4px;color:#fff;white-space:nowrap;transform:scaleX(0.991);transform-origin:0 50%;">when</div>
<div style="left:173px;top:356.5px;width:40.75px;height:8.75px;background:#e0d2ae;border-radius:2.5px;"></div>
<div style="left:176.4px;top:355.7px;height:10.9px;line-height:10.9px;font-size:8.4px;color:#222;white-space:nowrap;">Slider1</div>
<div style="left:204.7px;top:359.4px;width:0;height:0;border-left:2px solid transparent;border-right:2px solid transparent;border-top:3px solid #b18e35;opacity:.45"></div>
<div style="left:217.7px;top:356.0px;height:10.9px;line-height:10.9px;font-size:8.4px;color:#fff;white-space:nowrap;transform:scaleX(1.000);transform-origin:0 50%;">.PositionChanged</div>
<div style="left:152px;top:369.75px;width:59.75px;height:10.5px;background:#eba68a;border-radius:3px;box-shadow:inset 0 0 0 0.6px #c4764f"></div>
<div style="left:155.0px;top:370.2px;height:10.9px;line-height:10.9px;font-size:8.4px;color:#1a1a1a;white-space:nowrap;transform:scaleX(1.005);transform-origin:0 50%;">thumbPosition</div>
<div style="left:147.0px;top:384.7px;height:10.9px;line-height:10.9px;font-size:8.4px;color:#fff;white-space:nowrap;">do</div>
<div style="left:162.6px;top:392.3px;width:156.4px;height:6.3px;border-left:1px solid rgba(255,255,255,.85);border-bottom:1.2px solid rgba(255,255,255,.9);border-bottom-left-radius:5px;"></div>
<div style="left:163px;top:383px;width:156px;height:14.25px;background:#266643;border-radius:4px 0 0 4px;"></div>
<div style="left:169.4px;top:382.8px;width:10px;height:2.6px;background:#b18e35;clip-path:polygon(0 0,100% 0,72% 100%,28% 100%)"></div>
<div style="left:172.4px;top:397.0px;width:8px;height:3px;background:#266643;clip-path:polygon(0 0,100% 0,75% 100%,25% 100%)"></div>
<div style="left:168.5px;top:385.4px;height:10.9px;line-height:10.9px;font-size:8.4px;color:#fff;white-space:nowrap;transform:scaleX(1.053);transform-origin:0 50%;">set</div>
<div style="left:185.5px;top:385.75px;width:48px;height:8.75px;background:#a8c2b4;border-radius:2.5px;"></div>
<div style="left:189.0px;top:385.0px;height:10.9px;line-height:10.9px;font-size:8.4px;color:#222;white-space:nowrap;">Canvas1</div>
<div style="left:224.6px;top:388.7px;width:0;height:0;border-left:2px solid transparent;border-right:2px solid transparent;border-top:3px solid #266643;opacity:.45"></div>
<div style="left:236.5px;top:385.4px;height:10.9px;line-height:10.9px;font-size:8.4px;color:#fff;white-space:nowrap;">.</div>
<div style="left:242.5px;top:385.75px;width:52.25px;height:8.75px;background:#a8c2b4;border-radius:2.5px;"></div>
<div style="left:246.1px;top:385.0px;height:10.9px;line-height:10.9px;font-size:8.4px;color:#222;white-space:nowrap;">LineWidth</div>
<div style="left:285.7px;top:388.7px;width:0;height:0;border-left:2px solid transparent;border-right:2px solid transparent;border-top:3px solid #266643;opacity:.45"></div>
<div style="left:300.0px;top:385.4px;height:10.9px;line-height:10.9px;font-size:8.4px;color:#fff;white-space:nowrap;transform:scaleX(1.042);transform-origin:0 50%;">to</div>
<div style="left:319px;top:383px;width:92px;height:14.25px;background:#d05f2d;"></div>
<div style="left:315.5px;top:386.0px;width:4px;height:8px;background:#d05f2d;border-radius:2px 0 0 2px;"></div>
<div style="left:324.3px;top:385.4px;height:10.9px;line-height:10.9px;font-size:8.4px;color:#fff;white-space:nowrap;">get</div>
<div style="left:339px;top:385.75px;width:68px;height:8.75px;background:#ecbfab;border-radius:2.5px;"></div>
<div style="left:342.4px;top:385.0px;height:10.9px;line-height:10.9px;font-size:8.4px;color:#222;white-space:nowrap;">thumbPosition</div>
<div style="left:398.0px;top:388.7px;width:0;height:0;border-left:2px solid transparent;border-right:2px solid transparent;border-top:3px solid #d05f2d;opacity:.45"></div>
<div style="left:354.25px;top:167.25px;width:131.75px;height:15.75px;background:#b18e35;border-radius:4px 2px 0 0;"></div>
<div style="left:354.25px;top:182.5px;width:25.25px;height:63.5px;background:#b18e35;"></div>
<div style="left:354.25px;top:245.5px;width:131.75px;height:7.75px;background:#b18e35;border-radius:0 0 2px 4px;"></div>
<div style="left:359.8px;top:169.4px;height:10.9px;line-height:10.9px;font-size:8.4px;color:#fff;white-space:nowrap;transform:scaleX(0.981);transform-origin:0 50%;">when</div>
<div style="left:385.5px;top:170.25px;width:70px;height:8.5px;background:#e0d2ae;border-radius:2.5px;"></div>
<div style="left:388.9px;top:169.4px;height:10.9px;line-height:10.9px;font-size:8.4px;color:#222;white-space:nowrap;">ButtonZUFALL</div>
<div style="left:446.5px;top:173.1px;width:0;height:0;border-left:2px solid transparent;border-right:2px solid transparent;border-top:3px solid #b18e35;opacity:.45"></div>
<div style="left:459.0px;top:169.4px;height:10.9px;line-height:10.9px;font-size:8.4px;color:#fff;white-space:nowrap;transform:scaleX(0.994);transform-origin:0 50%;">.Click</div>
<div style="left:359.8px;top:184.0px;height:10.9px;line-height:10.9px;font-size:8.4px;color:#fff;white-space:nowrap;">do</div>
<div style="left:375.3px;top:240.4px;width:156.6px;height:6.3px;border-left:1px solid rgba(255,255,255,.85);border-bottom:1.2px solid rgba(255,255,255,.9);border-bottom-left-radius:5px;"></div>
<div style="left:375.5px;top:182.5px;width:156.5px;height:63px;background:#266643;border-radius:4px 0 0 4px;"></div>
<div style="left:382.1px;top:182.3px;width:10px;height:2.6px;background:#b18e35;clip-path:polygon(0 0,100% 0,72% 100%,28% 100%)"></div>
<div style="left:385.1px;top:245.1px;width:8px;height:3px;background:#266643;clip-path:polygon(0 0,100% 0,75% 100%,25% 100%)"></div>
<div style="left:381.0px;top:184.5px;height:10.9px;line-height:10.9px;font-size:8.4px;color:#fff;white-space:nowrap;transform:scaleX(1.053);transform-origin:0 50%;">set</div>
<div style="left:397.5px;top:185px;width:48.5px;height:8.75px;background:#a8c2b4;border-radius:2.5px;"></div>
<div style="left:401.1px;top:184.2px;height:10.9px;line-height:10.9px;font-size:8.4px;color:#222;white-space:nowrap;">Canvas1</div>
<div style="left:437.0px;top:187.8px;width:0;height:0;border-left:2px solid transparent;border-right:2px solid transparent;border-top:3px solid #266643;opacity:.45"></div>
<div style="left:449.0px;top:184.5px;height:10.9px;line-height:10.9px;font-size:8.4px;color:#fff;white-space:nowrap;">.</div>
<div style="left:455px;top:185px;width:54.25px;height:8.75px;background:#a8c2b4;border-radius:2.5px;"></div>
<div style="left:458.5px;top:184.2px;height:10.9px;line-height:10.9px;font-size:8.4px;color:#222;white-space:nowrap;">PaintColor</div>
<div style="left:500.2px;top:187.8px;width:0;height:0;border-left:2px solid transparent;border-right:2px solid transparent;border-top:3px solid #266643;opacity:.45"></div>
<div style="left:514.3px;top:184.5px;height:10.9px;line-height:10.9px;font-size:8.4px;color:#fff;white-space:nowrap;transform:scaleX(1.099);transform-origin:0 50%;">to</div>
<div style="left:532px;top:182.5px;width:59.25px;height:63px;background:#7d7d7d;"></div>
<div style="left:528.4px;top:185.5px;width:4px;height:8px;background:#7d7d7d;border-radius:2px 0 0 2px;"></div>
<div style="left:538.5px;top:184.5px;height:10.9px;line-height:10.9px;font-size:8.4px;color:#fff;white-space:nowrap;transform:scaleX(0.998);transform-origin:0 50%;">make color</div>
<div style="left:591.25px;top:182.25px;width:72.5px;height:63.5px;background:#49a6d4;"></div>
<div style="left:587.7px;top:185.3px;width:4px;height:8px;background:#49a6d4;border-radius:2px 0 0 2px;"></div>
<svg style="left:596.5px;top:185.3px;width:8.9px;height:8.9px" viewBox="0 0 9 9"><rect x="0.3" y="0.3" width="8.4" height="8.4" rx="1.8" fill="#1f3ff0" stroke="#9fb0ff" stroke-width="0.5"/><circle cx="4.5" cy="4.5" r="2.3" fill="none" stroke="#fff" stroke-width="1" stroke-dasharray="0.9 0.9"/><circle cx="4.5" cy="4.5" r="1.6" fill="none" stroke="#fff" stroke-width="0.8"/></svg>
<div style="left:612.2px;top:183.8px;height:10.9px;line-height:10.9px;font-size:8.4px;color:#fff;white-space:nowrap;transform:scaleX(1.014);transform-origin:0 50%;">make a list</div>
<div style="left:663.75px;top:182.25px;width:163px;height:21.25px;background:#3f71b5;"></div>
<div style="left:660.3px;top:185.3px;width:4px;height:8px;background:#3f71b5;border-radius:2px 0 0 2px;"></div>
<div style="left:668.9px;top:188.4px;height:10.9px;line-height:10.9px;font-size:8.4px;color:#fff;white-space:nowrap;transform:scaleX(1.006);transform-origin:0 50%;">random integer from</div>
<div style="left:752.75px;top:185.5px;width:19.5px;height:14.75px;background:#3f71b5;box-shadow:0 0 0 0.7px #5b86c2;"></div>
<div style="left:757.75px;top:188.5px;width:10.75px;height:8.75px;background:#b2c6e1;border-radius:2px"></div>
<div style="left:760.5px;top:188.4px;height:10.9px;line-height:10.9px;font-size:8.4px;color:#1a1a1a;white-space:nowrap;">1</div>
<div style="left:777.6px;top:188.4px;height:10.9px;line-height:10.9px;font-size:8.4px;color:#fff;white-space:nowrap;transform:scaleX(0.971);transform-origin:0 50%;">to</div>
<div style="left:792px;top:185.5px;width:29.25px;height:14.75px;background:#3f71b5;box-shadow:0 0 0 0.7px #5b86c2;"></div>
<div style="left:797px;top:188.5px;width:20.5px;height:8.75px;background:#b2c6e1;border-radius:2px"></div>
<div style="left:799.8px;top:188.4px;height:10.9px;line-height:10.9px;font-size:8.4px;color:#1a1a1a;white-space:nowrap;transform:scaleX(1.070);transform-origin:0 50%;">255</div>
<div style="left:663.75px;top:203.5px;width:163px;height:21px;background:#3f71b5;box-shadow:inset 0 0.8px 0 #6e92c9;"></div>
<div style="left:660.3px;top:206.5px;width:4px;height:8px;background:#3f71b5;border-radius:2px 0 0 2px;"></div>
<div style="left:668.9px;top:209.6px;height:10.9px;line-height:10.9px;font-size:8.4px;color:#fff;white-space:nowrap;transform:scaleX(1.006);transform-origin:0 50%;">random integer from</div>
<div style="left:752.75px;top:206.75px;width:19.5px;height:14.5px;background:#3f71b5;box-shadow:0 0 0 0.7px #5b86c2;"></div>
<div style="left:757.75px;top:209.75px;width:10.75px;height:8.5px;background:#b2c6e1;border-radius:2px"></div>
<div style="left:760.5px;top:209.6px;height:10.9px;line-height:10.9px;font-size:8.4px;color:#1a1a1a;white-space:nowrap;">1</div>
<div style="left:777.6px;top:209.6px;height:10.9px;line-height:10.9px;font-size:8.4px;color:#fff;white-space:nowrap;transform:scaleX(0.971);transform-origin:0 50%;">to</div>
<div style="left:792px;top:206.75px;width:29.25px;height:14.5px;background:#3f71b5;box-shadow:0 0 0 0.7px #5b86c2;"></div>
<div style="left:797px;top:209.75px;width:20.5px;height:8.5px;background:#b2c6e1;border-radius:2px"></div>
<div style="left:799.8px;top:209.6px;height:10.9px;line-height:10.9px;font-size:8.4px;color:#1a1a1a;white-space:nowrap;transform:scaleX(1.070);transform-origin:0 50%;">255</div>
<div style="left:663.75px;top:224.5px;width:163px;height:21.25px;background:#3f71b5;box-shadow:inset 0 0.8px 0 #6e92c9;"></div>
<div style="left:660.3px;top:227.6px;width:4px;height:8px;background:#3f71b5;border-radius:2px 0 0 2px;"></div>
<div style="left:668.9px;top:230.7px;height:10.9px;line-height:10.9px;font-size:8.4px;color:#fff;white-space:nowrap;transform:scaleX(1.006);transform-origin:0 50%;">random integer from</div>
<div style="left:752.75px;top:228px;width:19.5px;height:14.5px;background:#3f71b5;box-shadow:0 0 0 0.7px #5b86c2;"></div>
<div style="left:757.75px;top:231px;width:10.75px;height:8.5px;background:#b2c6e1;border-radius:2px"></div>
<div style="left:760.5px;top:230.7px;height:10.9px;line-height:10.9px;font-size:8.4px;color:#1a1a1a;white-space:nowrap;">1</div>
<div style="left:777.6px;top:230.7px;height:10.9px;line-height:10.9px;font-size:8.4px;color:#fff;white-space:nowrap;transform:scaleX(0.971);transform-origin:0 50%;">to</div>
<div style="left:792px;top:228px;width:29.25px;height:14.5px;background:#3f71b5;box-shadow:0 0 0 0.7px #5b86c2;"></div>
<div style="left:797px;top:231px;width:20.5px;height:8.5px;background:#b2c6e1;border-radius:2px"></div>
<div style="left:799.8px;top:230.7px;height:10.9px;line-height:10.9px;font-size:8.4px;color:#1a1a1a;white-space:nowrap;transform:scaleX(1.070);transform-origin:0 50%;">255</div>
<div style="left:596.5px;top:122px;width:91.5px;height:48.5px;background:#efbba6;border-radius:4px;"></div>
<div style="left:605.5px;top:125.25px;width:61.25px;height:14.25px;background:#d05f2d;"></div>
<div style="left:601.9px;top:128.2px;width:4px;height:8px;background:#d05f2d;border-radius:2px 0 0 2px;"></div>
<div style="left:610.5px;top:127.6px;height:10.9px;line-height:10.9px;font-size:8.4px;color:#fff;white-space:nowrap;">get</div>
<div style="left:626.25px;top:128.25px;width:37px;height:8.25px;background:#ecbfab;border-radius:2.5px;"></div>
<div style="left:629.7px;top:127.2px;height:10.9px;line-height:10.9px;font-size:8.4px;color:#222;white-space:nowrap;">prevX</div>
<div style="left:654.3px;top:130.9px;width:0;height:0;border-left:2px solid transparent;border-right:2px solid transparent;border-top:3px solid #d05f2d;opacity:.45"></div>
<div style="left:606px;top:149.25px;width:78px;height:14px;background:#d05f2d;border-radius:4px 0 0 4px;"></div>
<div style="left:612.5px;top:149.1px;width:10px;height:2.6px;background:#efbba6;clip-path:polygon(0 0,100% 0,72% 100%,28% 100%)"></div>
<div style="left:615.5px;top:162.9px;width:8px;height:3px;background:#d05f2d;clip-path:polygon(0 0,100% 0,75% 100%,25% 100%)"></div>
<div style="left:611.0px;top:151.5px;height:10.9px;line-height:10.9px;font-size:8.4px;color:#fff;white-space:nowrap;transform:scaleX(1.026);transform-origin:0 50%;">set</div>
<div style="left:626px;top:152.25px;width:36.5px;height:8.25px;background:#ecbfab;border-radius:2.5px;"></div>
<div style="left:629.5px;top:151.2px;height:10.9px;line-height:10.9px;font-size:8.4px;color:#222;white-space:nowrap;">prevX</div>
<div style="left:653.5px;top:154.8px;width:0;height:0;border-left:2px solid transparent;border-right:2px solid transparent;border-top:3px solid #d05f2d;opacity:.45"></div>
<div style="left:665.6px;top:151.5px;height:10.9px;line-height:10.9px;font-size:8.4px;color:#fff;white-space:nowrap;transform:scaleX(1.199);transform-origin:0 50%;">to</div>
<div style="left:486.25px;top:249.5px;width:331px;height:29px;background:#b18e35;border-radius:4px 2px 0 0;"></div>
<div style="left:486.25px;top:278.5px;width:25.75px;height:74.75px;background:#b18e35;"></div>
<div style="left:486.25px;top:352.75px;width:331px;height:7.5px;background:#b18e35;border-radius:0 0 2px 4px;"></div>
<div style="left:492.0px;top:251.2px;height:10.9px;line-height:10.9px;font-size:8.4px;color:#fff;white-space:nowrap;transform:scaleX(0.986);transform-origin:0 50%;">when</div>
<div style="left:517.5px;top:252.5px;width:48px;height:8.75px;background:#e0d2ae;border-radius:2.5px;"></div>
<div style="left:521.1px;top:251.7px;height:10.9px;line-height:10.9px;font-size:8.4px;color:#222;white-space:nowrap;">Canvas1</div>
<div style="left:556.4px;top:255.4px;width:0;height:0;border-left:2px solid transparent;border-right:2px solid transparent;border-top:3px solid #b18e35;opacity:.45"></div>
<div style="left:569.0px;top:251.2px;height:10.9px;line-height:10.9px;font-size:8.4px;color:#fff;white-space:nowrap;transform:scaleX(0.984);transform-origin:0 50%;">.Dragged</div>
<div style="left:496px;top:266.25px;width:27.75px;height:9.75px;background:#eba68a;border-radius:3px;box-shadow:inset 0 0 0 0.6px #c4764f"></div>
<div style="left:499.0px;top:266.4px;height:10.9px;line-height:10.9px;font-size:8.4px;color:#1a1a1a;white-space:nowrap;transform:scaleX(0.989);transform-origin:0 50%;">startX</div>
<div style="left:532.25px;top:266.25px;width:28.75px;height:9.75px;background:#eba68a;border-radius:3px;box-shadow:inset 0 0 0 0.6px #c4764f"></div>
<div style="left:535.3px;top:266.4px;height:10.9px;line-height:10.9px;font-size:8.4px;color:#1a1a1a;white-space:nowrap;transform:scaleX(1.035);transform-origin:0 50%;">startY</div>
<div style="left:568.25px;top:266.25px;width:28.75px;height:9.75px;background:#eba68a;border-radius:3px;box-shadow:inset 0 0 0 0.6px #c4764f"></div>
<div style="left:571.2px;top:266.4px;height:10.9px;line-height:10.9px;font-size:8.4px;color:#1a1a1a;white-space:nowrap;transform:scaleX(1.039);transform-origin:0 50%;">prevX</div>
<div style="left:604px;top:266.25px;width:28.75px;height:9.75px;background:#eba68a;border-radius:3px;box-shadow:inset 0 0 0 0.6px #c4764f"></div>
<div style="left:607.0px;top:266.4px;height:10.9px;line-height:10.9px;font-size:8.4px;color:#1a1a1a;white-space:nowrap;transform:scaleX(1.039);transform-origin:0 50%;">prevY</div>
<div style="left:640px;top:266.25px;width:38.25px;height:9.75px;background:#eba68a;border-radius:3px;box-shadow:inset 0 0 0 0.6px #c4764f"></div>
<div style="left:643.0px;top:266.4px;height:10.9px;line-height:10.9px;font-size:8.4px;color:#1a1a1a;white-space:nowrap;transform:scaleX(1.014);transform-origin:0 50%;">currentX</div>
<div style="left:685.75px;top:266.25px;width:38.75px;height:9.75px;background:#eba68a;border-radius:3px;box-shadow:inset 0 0 0 0.6px #c4764f"></div>
<div style="left:688.7px;top:266.4px;height:10.9px;line-height:10.9px;font-size:8.4px;color:#1a1a1a;white-space:nowrap;transform:scaleX(1.030);transform-origin:0 50%;">currentY</div>
<div style="left:732px;top:266.25px;width:73.75px;height:9.75px;background:#eba68a;border-radius:3px;box-shadow:inset 0 0 0 0.6px #c4764f"></div>
<div style="left:734.9px;top:266.4px;height:10.9px;line-height:10.9px;font-size:8.4px;color:#1a1a1a;white-space:nowrap;transform:scaleX(1.008);transform-origin:0 50%;">draggedAnySprite</div>
<div style="left:492.0px;top:280.2px;height:10.9px;line-height:10.9px;font-size:8.4px;color:#fff;white-space:nowrap;">do</div>
<div style="left:507.7px;top:347.8px;width:123.7px;height:6.3px;border-left:1px solid rgba(255,255,255,.85);border-bottom:1.2px solid rgba(255,255,255,.9);border-bottom-left-radius:5px;"></div>
<div style="left:508px;top:279.25px;width:123.5px;height:73.5px;background:#7c5385;border-radius:4px 0 0 4px;"></div>
<div style="left:514.5px;top:279.1px;width:10px;height:2.6px;background:#b18e35;clip-path:polygon(0 0,100% 0,72% 100%,28% 100%)"></div>
<div style="left:517.5px;top:352.5px;width:8px;height:3px;background:#7c5385;clip-path:polygon(0 0,100% 0,75% 100%,25% 100%)"></div>
<div style="left:513.0px;top:280.7px;height:10.9px;line-height:10.9px;font-size:8.4px;color:#fff;white-space:nowrap;transform:scaleX(0.992);transform-origin:0 50%;">call</div>
<div style="left:531.25px;top:281.75px;width:47.75px;height:8.5px;background:#cbbace;border-radius:2.5px;"></div>
<div style="left:534.8px;top:280.8px;height:10.9px;line-height:10.9px;font-size:8.4px;color:#222;white-space:nowrap;">Canvas1</div>
<div style="left:570.0px;top:284.4px;width:0;height:0;border-left:2px solid transparent;border-right:2px solid transparent;border-top:3px solid #7c5385;opacity:.45"></div>
<div style="left:582.5px;top:281.0px;height:10.9px;line-height:10.9px;font-size:8.4px;color:#fff;white-space:nowrap;transform:scaleX(1.013);transform-origin:0 50%;">.DrawLine</div>
<div style="left:611.1px;top:295.7px;height:10.9px;line-height:10.9px;font-size:8.4px;color:#fff;white-space:nowrap;">x1</div>
<div style="left:611.1px;top:310.4px;height:10.9px;line-height:10.9px;font-size:8.4px;color:#fff;white-space:nowrap;">y1</div>
<div style="left:611.1px;top:325.8px;height:10.9px;line-height:10.9px;font-size:8.4px;color:#fff;white-space:nowrap;">x2</div>
<div style="left:611.1px;top:340.5px;height:10.9px;line-height:10.9px;font-size:8.4px;color:#fff;white-space:nowrap;">y2</div>
<div style="left:631.5px;top:293.25px;width:61.5px;height:15.25px;background:#d05f2d;"></div>
<div style="left:627.9px;top:296.2px;width:4px;height:8px;background:#d05f2d;border-radius:2px 0 0 2px;"></div>
<div style="left:637.2px;top:296.0px;height:10.9px;line-height:10.9px;font-size:8.4px;color:#fff;white-space:nowrap;transform:scaleX(1.053);transform-origin:0 50%;">get</div>
<div style="left:652.5px;top:296.25px;width:36.75px;height:9.25px;background:#ecbfab;border-radius:2.5px;"></div>
<div style="left:656.1px;top:295.6px;height:10.9px;line-height:10.9px;font-size:8.4px;color:#222;white-space:nowrap;">prevX</div>
<div style="left:680.2px;top:299.3px;width:0;height:0;border-left:2px solid transparent;border-right:2px solid transparent;border-top:3px solid #d05f2d;opacity:.45"></div>
<div style="left:631.5px;top:308.5px;width:61.5px;height:14.75px;background:#d05f2d;box-shadow:inset 0 0.7px 0 #e08a63;"></div>
<div style="left:627.9px;top:311.4px;width:4px;height:8px;background:#d05f2d;border-radius:2px 0 0 2px;"></div>
<div style="left:637.2px;top:311.0px;height:10.9px;line-height:10.9px;font-size:8.4px;color:#fff;white-space:nowrap;transform:scaleX(1.053);transform-origin:0 50%;">get</div>
<div style="left:652.5px;top:311.5px;width:36.75px;height:8.75px;background:#ecbfab;border-radius:2.5px;"></div>
<div style="left:656.1px;top:310.6px;height:10.9px;line-height:10.9px;font-size:8.4px;color:#222;white-space:nowrap;">prevY</div>
<div style="left:680.2px;top:314.3px;width:0;height:0;border-left:2px solid transparent;border-right:2px solid transparent;border-top:3px solid #d05f2d;opacity:.45"></div>
<div style="left:631.5px;top:323.25px;width:71.5px;height:15px;background:#d05f2d;box-shadow:inset 0 0.7px 0 #e08a63;"></div>
<div style="left:627.9px;top:326.2px;width:4px;height:8px;background:#d05f2d;border-radius:2px 0 0 2px;"></div>
<div style="left:637.2px;top:326.0px;height:10.9px;line-height:10.9px;font-size:8.4px;color:#fff;white-space:nowrap;transform:scaleX(1.053);transform-origin:0 50%;">get</div>
<div style="left:652.5px;top:326.25px;width:46.25px;height:9px;background:#ecbfab;border-radius:2.5px;"></div>
<div style="left:656.1px;top:325.6px;height:10.9px;line-height:10.9px;font-size:8.4px;color:#222;white-space:nowrap;">currentX</div>
<div style="left:689.7px;top:329.2px;width:0;height:0;border-left:2px solid transparent;border-right:2px solid transparent;border-top:3px solid #d05f2d;opacity:.45"></div>
<div style="left:631.5px;top:338.25px;width:71.5px;height:14.75px;background:#d05f2d;box-shadow:inset 0 0.7px 0 #e08a63;"></div>
<div style="left:627.9px;top:341.3px;width:4px;height:8px;background:#d05f2d;border-radius:2px 0 0 2px;"></div>
<div style="left:637.2px;top:340.9px;height:10.9px;line-height:10.9px;font-size:8.4px;color:#fff;white-space:nowrap;transform:scaleX(1.053);transform-origin:0 50%;">get</div>
<div style="left:652.5px;top:341.25px;width:46.25px;height:8.75px;background:#ecbfab;border-radius:2.5px;"></div>
<div style="left:656.1px;top:340.5px;height:10.9px;line-height:10.9px;font-size:8.4px;color:#222;white-space:nowrap;">currentY</div>
<div style="left:689.7px;top:344.1px;width:0;height:0;border-left:2px solid transparent;border-right:2px solid transparent;border-top:3px solid #d05f2d;opacity:.45"></div>
<div style="left:715.25px;top:325.25px;width:181.75px;height:30px;background:#b18e35;border-radius:4px 2px 0 0;"></div>
<div style="left:715.25px;top:355.25px;width:25.75px;height:59.5px;background:#b18e35;"></div>
<div style="left:715.25px;top:414.25px;width:181.75px;height:5.25px;background:#b18e35;border-radius:0 0 2px 4px;"></div>
<div style="left:720.8px;top:327.8px;height:10.9px;line-height:10.9px;font-size:8.4px;color:#fff;white-space:nowrap;transform:scaleX(0.981);transform-origin:0 50%;">when</div>
<div style="left:746.5px;top:328.75px;width:85px;height:8.25px;background:#e0d2ae;border-radius:2.5px;"></div>
<div style="left:750.1px;top:327.7px;height:10.9px;line-height:10.9px;font-size:8.4px;color:#222;white-space:nowrap;">NotifierRADIERER</div>
<div style="left:822.6px;top:331.4px;width:0;height:0;border-left:2px solid transparent;border-right:2px solid transparent;border-top:3px solid #b18e35;opacity:.45"></div>
<div style="left:836.0px;top:327.8px;height:10.9px;line-height:10.9px;font-size:8.4px;color:#fff;white-space:nowrap;transform:scaleX(0.990);transform-origin:0 50%;">.AfterChoosing</div>
<div style="left:726px;top:343px;width:30.25px;height:8.5px;background:#eba68a;border-radius:3px;box-shadow:inset 0 0 0 0.6px #c4764f"></div>
<div style="left:729.0px;top:342.4px;height:10.9px;line-height:10.9px;font-size:8.4px;color:#1a1a1a;white-space:nowrap;transform:scaleX(0.988);transform-origin:0 50%;">choice</div>
<div style="left:720.8px;top:356.2px;height:10.9px;line-height:10.9px;font-size:8.4px;color:#fff;white-space:nowrap;">do</div>
<div style="left:737.25px;top:355.25px;width:44.5px;height:21.5px;background:#b18e35;border-radius:4px 0 0 0;box-shadow:0 0 0 0.6px #8a6d25;"></div>
<div style="left:737.25px;top:376.25px;width:31.5px;height:30.75px;background:#b18e35;box-shadow:-0.6px 0 0 0 #8a6d25;"></div>
<div style="left:737.25px;top:406.5px;width:44.5px;height:7.25px;background:#b18e35;border-radius:0 0 0 4px;box-shadow:0 0.6px 0 0 #8a6d25;"></div>
<svg style="left:743px;top:358px;width:8px;height:8px" viewBox="0 0 9 9"><rect x="0.3" y="0.3" width="8.4" height="8.4" rx="1.8" fill="#1f3ff0" stroke="#9fb0ff" stroke-width="0.5"/><circle cx="4.5" cy="4.5" r="2.3" fill="none" stroke="#fff" stroke-width="1" stroke-dasharray="0.9 0.9"/><circle cx="4.5" cy="4.5" r="1.6" fill="none" stroke="#fff" stroke-width="0.8"/></svg>
<div style="left:757.8px;top:357.2px;height:10.9px;line-height:10.9px;font-size:8.4px;color:#fff;white-space:nowrap;">if</div>
<div style="left:742.2px;top:377.6px;height:10.9px;line-height:10.9px;font-size:8.4px;color:#fff;white-space:nowrap;transform:scaleX(1.015);transform-origin:0 50%;">then</div>
<div style="left:781.75px;top:355.25px;width:209.5px;height:20.5px;background:#b32d5e;"></div>
<div style="left:778.3px;top:358.2px;width:4px;height:8px;background:#b32d5e;border-radius:2px 0 0 2px;"></div>
<div style="left:788.2px;top:360.6px;height:10.9px;line-height:10.9px;font-size:8.4px;color:#fff;white-space:nowrap;transform:scaleX(1.001);transform-origin:0 50%;">compare texts</div>
<div style="left:850.5px;top:359px;width:64.5px;height:13.75px;background:#d05f2d;"></div>
<div style="left:847.1px;top:362.0px;width:4px;height:8px;background:#d05f2d;border-radius:2px 0 0 2px;"></div>
<div style="left:856.0px;top:361.0px;height:10.9px;line-height:10.9px;font-size:8.4px;color:#fff;white-space:nowrap;">get</div>
<div style="left:871px;top:361.5px;width:40.5px;height:8.75px;background:#ecbfab;border-radius:2.5px;"></div>
<div style="left:874.6px;top:360.7px;height:10.9px;line-height:10.9px;font-size:8.4px;color:#222;white-space:nowrap;">choice</div>
<div style="left:902.6px;top:364.4px;width:0;height:0;border-left:2px solid transparent;border-right:2px solid transparent;border-top:3px solid #d05f2d;opacity:.45"></div>
<div style="left:917.5px;top:361px;width:22.5px;height:8.25px;background:#e1abbf;border-radius:2.5px;"></div>
<div style="left:920.9px;top:359.9px;height:10.9px;line-height:10.9px;font-size:8.4px;color:#222;white-space:nowrap;"> =</div>
<div style="left:931.0px;top:363.6px;width:0;height:0;border-left:2px solid transparent;border-right:2px solid transparent;border-top:3px solid #b32d5e;opacity:.45"></div>
<div style="left:947.25px;top:356.5px;width:39.75px;height:17.75px;background:#b32d5e;box-shadow:inset 0 0 0 0.7px #d9739a;"></div>
<div style="left:943.8px;top:359.6px;width:4px;height:8px;background:#b32d5e;border-radius:2px 0 0 2px;"></div>
<div style="left:951.0px;top:359.9px;height:13.0px;line-height:13.0px;font-size:10px;color:#fff;white-space:nowrap;">“</div>
<div style="left:958.5px;top:361px;width:15.25px;height:8.5px;background:#e1abbf;border-radius:2.5px;"></div>
<div style="left:961.7px;top:360.1px;height:10.9px;line-height:10.9px;font-size:8.4px;color:#222;white-space:nowrap;">Ja</div>
<div style="left:978.5px;top:359.9px;height:13.0px;line-height:13.0px;font-size:10px;color:#fff;white-space:nowrap;">”</div>
<div style="left:765.4px;top:385.3px;width:103.6px;height:6.3px;border-left:1px solid rgba(255,255,255,.85);border-bottom:1.2px solid rgba(255,255,255,.9);border-bottom-left-radius:5px;"></div>
<div style="left:765.75px;top:376.5px;width:103.25px;height:13.75px;background:#7c5385;border-radius:4px 0 0 4px;"></div>
<div style="left:772.2px;top:376.3px;width:10px;height:2.6px;background:#b18e35;clip-path:polygon(0 0,100% 0,72% 100%,28% 100%)"></div>
<div style="left:775.2px;top:390.0px;width:8px;height:3px;background:#7c5385;clip-path:polygon(0 0,100% 0,75% 100%,25% 100%)"></div>
<div style="left:771.0px;top:378.1px;height:10.9px;line-height:10.9px;font-size:8.4px;color:#fff;white-space:nowrap;transform:scaleX(0.992);transform-origin:0 50%;">call</div>
<div style="left:788.5px;top:379.25px;width:49px;height:8.5px;background:#cbbace;border-radius:2.5px;"></div>
<div style="left:792.0px;top:378.3px;height:10.9px;line-height:10.9px;font-size:8.4px;color:#222;white-space:nowrap;">Canvas1</div>
<div style="left:828.5px;top:382.0px;width:0;height:0;border-left:2px solid transparent;border-right:2px solid transparent;border-top:3px solid #7c5385;opacity:.45"></div>
<div style="left:840.4px;top:378.1px;height:10.9px;line-height:10.9px;font-size:8.4px;color:#fff;white-space:nowrap;transform:scaleX(1.009);transform-origin:0 50%;">.Clear</div>
<div style="left:765.4px;top:400.6px;width:185.6px;height:6.3px;border-left:1px solid rgba(255,255,255,.85);border-bottom:1.2px solid rgba(255,255,255,.9);border-bottom-left-radius:5px;"></div>
<div style="left:765.75px;top:391.25px;width:185.25px;height:14.25px;background:#266643;border-radius:4px 0 0 4px;"></div>
<div style="left:772.2px;top:391.0px;width:10px;height:2.6px;background:#b18e35;clip-path:polygon(0 0,100% 0,72% 100%,28% 100%)"></div>
<div style="left:775.2px;top:405.3px;width:8px;height:3px;background:#266643;clip-path:polygon(0 0,100% 0,75% 100%,25% 100%)"></div>
<div style="left:771.0px;top:393.6px;height:10.9px;line-height:10.9px;font-size:8.4px;color:#fff;white-space:nowrap;transform:scaleX(1.053);transform-origin:0 50%;">set</div>
<div style="left:787.5px;top:394px;width:48px;height:8.5px;background:#a8c2b4;border-radius:2.5px;"></div>
<div style="left:791.1px;top:393.2px;height:10.9px;line-height:10.9px;font-size:8.4px;color:#222;white-space:nowrap;">Canvas1</div>
<div style="left:826.4px;top:396.9px;width:0;height:0;border-left:2px solid transparent;border-right:2px solid transparent;border-top:3px solid #266643;opacity:.45"></div>
<div style="left:838.5px;top:393.6px;height:10.9px;line-height:10.9px;font-size:8.4px;color:#fff;white-space:nowrap;">.</div>
<div style="left:844.75px;top:394px;width:83.5px;height:8.5px;background:#a8c2b4;border-radius:2.5px;"></div>
<div style="left:848.3px;top:393.2px;height:10.9px;line-height:10.9px;font-size:8.4px;color:#222;white-space:nowrap;">BackgroundImage</div>
<div style="left:919.3px;top:396.9px;width:0;height:0;border-left:2px solid transparent;border-right:2px solid transparent;border-top:3px solid #266643;opacity:.45"></div>
<div style="left:933.3px;top:393.6px;height:10.9px;line-height:10.9px;font-size:8.4px;color:#fff;white-space:nowrap;transform:scaleX(1.171);transform-origin:0 50%;">to</div>
<div style="left:951px;top:391.25px;width:59px;height:14.25px;background:#b18e35;"></div>
<div style="left:947.5px;top:394.2px;width:4px;height:8px;background:#b18e35;border-radius:2px 0 0 2px;"></div>
<div style="left:957.6px;top:393.6px;height:10.9px;line-height:10.9px;font-size:8.4px;color:#fff;white-space:nowrap;">get start value</div>
<div style="left:436.25px;top:371.25px;width:150px;height:16px;background:#b18e35;border-radius:4px 2px 0 0;"></div>
<div style="left:436.25px;top:386.75px;width:25.75px;height:57.5px;background:#b18e35;"></div>
<div style="left:436.25px;top:443.75px;width:150px;height:7.75px;background:#b18e35;border-radius:0 0 2px 4px;"></div>
<div style="left:442.0px;top:373.0px;height:10.9px;line-height:10.9px;font-size:8.4px;color:#fff;white-space:nowrap;transform:scaleX(0.986);transform-origin:0 50%;">when</div>
<div style="left:467px;top:373.75px;width:88.75px;height:8.5px;background:#e0d2ae;border-radius:2.5px;"></div>
<div style="left:470.5px;top:372.8px;height:10.9px;line-height:10.9px;font-size:8.4px;color:#222;white-space:nowrap;">ButtonSPEICHERN</div>
<div style="left:546.8px;top:376.4px;width:0;height:0;border-left:2px solid transparent;border-right:2px solid transparent;border-top:3px solid #b18e35;opacity:.45"></div>
<div style="left:559.2px;top:373.0px;height:10.9px;line-height:10.9px;font-size:8.4px;color:#fff;white-space:nowrap;transform:scaleX(0.984);transform-origin:0 50%;">.Click</div>
<div style="left:442.0px;top:388.4px;height:10.9px;line-height:10.9px;font-size:8.4px;color:#fff;white-space:nowrap;">do</div>
<div style="left:457.7px;top:438.7px;width:128.3px;height:6.3px;border-left:1px solid rgba(255,255,255,.85);border-bottom:1.2px solid rgba(255,255,255,.9);border-bottom-left-radius:5px;"></div>
<div style="left:458px;top:386.75px;width:128px;height:57px;background:#7c5385;border-radius:4px 0 0 4px;"></div>
<div style="left:464.5px;top:386.5px;width:10px;height:2.6px;background:#b18e35;clip-path:polygon(0 0,100% 0,72% 100%,28% 100%)"></div>
<div style="left:467.5px;top:443.4px;width:8px;height:3px;background:#7c5385;clip-path:polygon(0 0,100% 0,75% 100%,25% 100%)"></div>
<div style="left:463.2px;top:388.4px;height:10.9px;line-height:10.9px;font-size:8.4px;color:#fff;white-space:nowrap;transform:scaleX(0.992);transform-origin:0 50%;">call</div>
<div style="left:481.25px;top:389.75px;width:47.25px;height:7.75px;background:#cbbace;border-radius:2.5px;"></div>
<div style="left:484.8px;top:388.5px;height:10.9px;line-height:10.9px;font-size:8.4px;color:#222;white-space:nowrap;">TinyDB1</div>
<div style="left:519.4px;top:392.1px;width:0;height:0;border-left:2px solid transparent;border-right:2px solid transparent;border-top:3px solid #7c5385;opacity:.45"></div>
<div style="left:531.8px;top:388.4px;height:10.9px;line-height:10.9px;font-size:8.4px;color:#fff;white-space:nowrap;transform:scaleX(0.989);transform-origin:0 50%;">.StoreValue</div>
<div style="left:562.9px;top:402.4px;height:10.9px;line-height:10.9px;font-size:8.4px;color:#fff;white-space:nowrap;">tag</div>
<div style="left:525.7px;top:417.4px;height:10.9px;line-height:10.9px;font-size:8.4px;color:#fff;white-space:nowrap;transform:scaleX(0.997);transform-origin:0 50%;">valueToStore</div>
<div style="left:585.75px;top:400.25px;width:61.25px;height:14.5px;background:#b32d5e;"></div>
<div style="left:582.3px;top:403.3px;width:4px;height:8px;background:#b32d5e;border-radius:2px 0 0 2px;"></div>
<div style="left:590.5px;top:402.0px;height:13.0px;line-height:13.0px;font-size:10px;color:#fff;white-space:nowrap;">“</div>
<div style="left:597.5px;top:403.75px;width:37.5px;height:7.5px;background:#e1abbf;border-radius:2.5px;"></div>
<div style="left:600.4px;top:402.3px;height:10.9px;line-height:10.9px;font-size:8.4px;color:#222;white-space:nowrap;">filename</div>
<div style="left:638.5px;top:402.0px;height:13.0px;line-height:13.0px;font-size:10px;color:#fff;white-space:nowrap;">”</div>
<div style="left:586px;top:415.5px;width:117.5px;height:28.25px;background:#7c5385;box-shadow:inset 0.6px 0 0 #9a78a2;"></div>
<div style="left:582.5px;top:418.4px;width:4px;height:8px;background:#7c5385;border-radius:2px 0 0 2px;"></div>
<div style="left:591.3px;top:417.4px;height:10.9px;line-height:10.9px;font-size:8.4px;color:#fff;white-space:nowrap;transform:scaleX(0.992);transform-origin:0 50%;">call</div>
<div style="left:609.5px;top:418px;width:48.5px;height:8.5px;background:#cbbace;border-radius:2.5px;"></div>
<div style="left:612.9px;top:417.1px;height:10.9px;line-height:10.9px;font-size:8.4px;color:#222;white-space:nowrap;">Canvas1</div>
<div style="left:649.0px;top:420.8px;width:0;height:0;border-left:2px solid transparent;border-right:2px solid transparent;border-top:3px solid #7c5385;opacity:.45"></div>
<div style="left:661.4px;top:417.4px;height:10.9px;line-height:10.9px;font-size:8.4px;color:#fff;white-space:nowrap;transform:scaleX(0.994);transform-origin:0 50%;">.SaveAs</div>
<div style="left:659.4px;top:432.2px;height:10.9px;line-height:10.9px;font-size:8.4px;color:#fff;white-space:nowrap;">fileName</div>
<div style="left:703.5px;top:430px;width:56.25px;height:13.75px;background:#b32d5e;"></div>
<div style="left:699.9px;top:433.0px;width:4px;height:8px;background:#b32d5e;border-radius:2px 0 0 2px;"></div>
<div style="left:707.5px;top:431.3px;height:13.0px;line-height:13.0px;font-size:10px;color:#fff;white-space:nowrap;">“</div>
<div style="left:714.75px;top:432.5px;width:33px;height:8.75px;background:#e1abbf;border-radius:2.5px;"></div>
<div style="left:717.7px;top:431.7px;height:10.9px;line-height:10.9px;font-size:8.4px;color:#222;white-space:nowrap;">file.png</div>
<div style="left:751.0px;top:431.3px;height:13.0px;line-height:13.0px;font-size:10px;color:#fff;white-space:nowrap;">”</div>
<div style="left:155.5px;top:449.25px;width:144.5px;height:16.25px;background:#ffc800;border-radius:5px 3px 0 0;"></div>
<div style="left:155.5px;top:464.5px;width:23.75px;height:46px;background:#ffc800;"></div>
<div style="left:155.5px;top:509.5px;width:144.5px;height:7.75px;background:#ffc800;border-radius:0 0 3px 5px;"></div>
<div style="left:157.25px;top:451px;width:141px;height:14px;background:#b18e35;border-radius:4px 2px 0 0;"></div>
<div style="left:157.25px;top:464.5px;width:22px;height:45.5px;background:#b18e35;"></div>
<div style="left:157.25px;top:509.5px;width:141px;height:6px;background:#b18e35;border-radius:0 0 2px 4px;"></div>
<div style="left:161.7px;top:452.2px;height:10.9px;line-height:10.9px;font-size:8.4px;color:#fff;white-space:nowrap;transform:scaleX(0.986);transform-origin:0 50%;">when</div>
<div style="left:187px;top:453.25px;width:82.5px;height:8.25px;background:#e0d2ae;border-radius:2.5px;"></div>
<div style="left:190.5px;top:452.2px;height:10.9px;line-height:10.9px;font-size:8.4px;color:#222;white-space:nowrap;">ButtonANZEIGEN</div>
<div style="left:260.5px;top:455.9px;width:0;height:0;border-left:2px solid transparent;border-right:2px solid transparent;border-top:3px solid #b18e35;opacity:.45"></div>
<div style="left:273.0px;top:452.2px;height:10.9px;line-height:10.9px;font-size:8.4px;color:#fff;white-space:nowrap;transform:scaleX(0.998);transform-origin:0 50%;">.Click</div>
<div style="left:177.0px;top:504.5px;width:186.7px;height:6.3px;border-left:1px solid rgba(255,255,255,.85);border-bottom:1.2px solid rgba(255,255,255,.9);border-bottom-left-radius:5px;"></div>
<div style="left:177.25px;top:464.5px;width:186.5px;height:45px;background:#266643;border-radius:4px 0 0 4px;"></div>
<div style="left:183.8px;top:464.3px;width:10px;height:2.6px;background:#b18e35;clip-path:polygon(0 0,100% 0,72% 100%,28% 100%)"></div>
<div style="left:186.8px;top:509.2px;width:8px;height:3px;background:#266643;clip-path:polygon(0 0,100% 0,75% 100%,25% 100%)"></div>
<div style="left:183.2px;top:468.2px;height:10.9px;line-height:10.9px;font-size:8.4px;color:#fff;white-space:nowrap;transform:scaleX(1.053);transform-origin:0 50%;">set</div>
<div style="left:199.75px;top:468.5px;width:48px;height:8.75px;background:#a8c2b4;border-radius:2.5px;"></div>
<div style="left:203.3px;top:467.6px;height:10.9px;line-height:10.9px;font-size:8.4px;color:#222;white-space:nowrap;">Canvas1</div>
<div style="left:238.7px;top:471.3px;width:0;height:0;border-left:2px solid transparent;border-right:2px solid transparent;border-top:3px solid #266643;opacity:.45"></div>
<div style="left:250.5px;top:468.2px;height:10.9px;line-height:10.9px;font-size:8.4px;color:#fff;white-space:nowrap;">.</div>
<div style="left:256.5px;top:468.5px;width:83.25px;height:8.75px;background:#a8c2b4;border-radius:2.5px;"></div>
<div style="left:259.9px;top:467.6px;height:10.9px;line-height:10.9px;font-size:8.4px;color:#222;white-space:nowrap;">BackgroundImage</div>
<div style="left:330.8px;top:471.3px;width:0;height:0;border-left:2px solid transparent;border-right:2px solid transparent;border-top:3px solid #266643;opacity:.45"></div>
<div style="left:345.3px;top:467.7px;height:10.9px;line-height:10.9px;font-size:8.4px;color:#fff;white-space:nowrap;transform:scaleX(1.028);transform-origin:0 50%;">to</div>
<div style="left:363.75px;top:465px;width:121.25px;height:44.5px;background:#7c5385;"></div>
<div style="left:360.2px;top:468.0px;width:4px;height:8px;background:#7c5385;border-radius:2px 0 0 2px;"></div>
<div style="left:369.8px;top:467.7px;height:10.9px;line-height:10.9px;font-size:8.4px;color:#fff;white-space:nowrap;transform:scaleX(0.968);transform-origin:0 50%;">call</div>
<div style="left:387.25px;top:468.5px;width:47.25px;height:9px;background:#cbbace;border-radius:2.5px;"></div>
<div style="left:390.8px;top:467.8px;height:10.9px;line-height:10.9px;font-size:8.4px;color:#222;white-space:nowrap;">TinyDB1</div>
<div style="left:425.4px;top:471.5px;width:0;height:0;border-left:2px solid transparent;border-right:2px solid transparent;border-top:3px solid #7c5385;opacity:.45"></div>
<div style="left:437.8px;top:467.7px;height:10.9px;line-height:10.9px;font-size:8.4px;color:#fff;white-space:nowrap;transform:scaleX(0.996);transform-origin:0 50%;">.GetValue</div>
<div style="left:462.7px;top:482.2px;height:10.9px;line-height:10.9px;font-size:8.4px;color:#fff;white-space:nowrap;">tag</div>
<div style="left:400.8px;top:497.4px;height:10.9px;line-height:10.9px;font-size:8.4px;color:#fff;white-space:nowrap;transform:scaleX(1.004);transform-origin:0 50%;">valueIfTagNotThere</div>
<div style="left:485px;top:479.75px;width:61.75px;height:15px;background:#b32d5e;"></div>
<div style="left:481.5px;top:482.7px;width:4px;height:8px;background:#b32d5e;border-radius:2px 0 0 2px;"></div>
<div style="left:489.5px;top:481.7px;height:13.0px;line-height:13.0px;font-size:10px;color:#fff;white-space:nowrap;">“</div>
<div style="left:497px;top:482.5px;width:37.75px;height:9px;background:#e1abbf;border-radius:2.5px;"></div>
<div style="left:500.0px;top:481.8px;height:10.9px;line-height:10.9px;font-size:8.4px;color:#222;white-space:nowrap;">filename</div>
<div style="left:538.5px;top:481.7px;height:13.0px;line-height:13.0px;font-size:10px;color:#fff;white-space:nowrap;">”</div>
<div style="left:485px;top:495.5px;width:32px;height:14px;background:#b32d5e;"></div>
<div style="left:481.5px;top:498.4px;width:4px;height:8px;background:#b32d5e;border-radius:2px 0 0 2px;"></div>
<div style="left:489.5px;top:496.9px;height:13.0px;line-height:13.0px;font-size:10px;color:#fff;white-space:nowrap;">“</div>
<div style="left:497px;top:497.75px;width:8.25px;height:9px;background:#e1abbf;border-radius:2px"></div>
<div style="left:508.5px;top:496.9px;height:13.0px;line-height:13.0px;font-size:10px;color:#fff;white-space:nowrap;">”</div>
<svg style="left:158.8px;top:468.4px;width:12.199999999999989px;height:5.900000000000034px" viewBox="0 0 12 6"><path d="M0.5 5.5 L6 0.5 L11.5 5.5 Z" fill="#fff" stroke="#777" stroke-width="0.8"/></svg>
<svg style="left:159.4px;top:477.8px;width:9.1px;height:8.2px" viewBox="0 0 10 9"><path d="M5 0.5 L9.6 8.6 L0.4 8.6 Z" fill="#f0d75a" stroke="#c9a92a" stroke-width="0.6"/><rect x="4.5" y="3" width="1" height="3.2" fill="#7a6a20"/><rect x="4.5" y="6.8" width="1" height="1" fill="#7a6a20"/></svg>
<div style="left:170.5px;top:477.5px;height:10.9px;line-height:10.9px;font-size:8.4px;color:#222;white-space:nowrap;">0</div>
<svg style="left:158.8px;top:489.5px;width:12.199999999999989px;height:6.300000000000011px" viewBox="0 0 12 6"><path d="M0.5 0.5 L6 5.5 L11.5 0.5 Z" fill="#fff" stroke="#777" stroke-width="0.8"/></svg>
<svg style="left:197.9px;top:468px;width:11.699999999999989px;height:6.699999999999989px" viewBox="0 0 12 6"><path d="M0.5 5.5 L6 0.5 L11.5 5.5 Z" fill="#fff" stroke="#777" stroke-width="0.8"/></svg>
<svg style="left:196.5px;top:478.2px;width:9.2px;height:9px" viewBox="0 0 10 10"><circle cx="5" cy="5" r="4.7" fill="#d9343b"/><path d="M3 3 L7 7 M7 3 L3 7" stroke="#fff" stroke-width="1.3"/></svg>
<div style="left:208.2px;top:477.8px;height:10.9px;line-height:10.9px;font-size:8.4px;color:#222;white-space:nowrap;">0</div>
<svg style="left:197.9px;top:490px;width:11.099999999999994px;height:5.399999999999977px" viewBox="0 0 12 6"><path d="M0.5 0.5 L6 5.5 L11.5 0.5 Z" fill="#fff" stroke="#777" stroke-width="0.8"/></svg>
<div style="left:150px;top:497.25px;width:69.25px;height:11.75px;background:#efefef;border:1px solid #555;box-sizing:border-box;"></div>
<div style="left:158.2px;top:498.4px;height:10.9px;line-height:10.9px;font-size:8.4px;color:#333;white-space:nowrap;transform:scaleX(0.911);transform-origin:0 50%;">Show Warnings</div>
</div></div>
<svg style="left:934px;top:126px;width:60px;height:54px" viewBox="0 0 60 54">
<g stroke="#0f3530" stroke-width="1.3" stroke-linejoin="round">
<path d="M24.5 9 C25 4 34 4 35 9" fill="none" stroke-width="1.8"/>
<path d="M35 10 L38 12 L36 30 Z" fill="#2f9a88"/>
<path d="M5.5 17 L8 13.5 L11.5 13 L12.5 12 L14 13 L19.5 12.5 L20.5 30.5 L11 30.5 Z" fill="#d9642b"/>
<path d="M20.5 10 L24 9.8 L25.5 8.8 L27 9.8 L34.8 10 L34.8 30.5 L20.9 30.5 Z" fill="#4ba3d8"/>
<path d="M36.2 11.4 L42 12.8 L43 12 L44.5 13.8 L51.6 15.4 L46.7 32 L35.7 30.5 Z" fill="#7f4f91"/>
<path d="M50.6 17.4 C53.5 24 54.8 33 54.2 42" fill="none" stroke-width="1.8"/>
<path d="M9 31.5 C18 30 38 29.5 49.5 31 C51.5 36 52 44 50.5 47.5 C45 50.5 25 51 15.5 49.5 C9 48 6.5 44 6.5 38 C6.5 34.5 7.5 32.5 9 31.5 Z" fill="#3db3a3"/>
<path d="M7.5 36 C10 32 20 31.5 44 33 C39 39 30 44 22 44.5 C14 45 9 43 7.5 40" fill="none" stroke-width="1.1"/>
<path d="M33 40 L39 39.5 L39 44 L32.5 44.3" fill="none" stroke-width="1"/>
</g>
</svg>
<svg style="left:962px;top:398.5px;width:21px;height:21px" viewBox="0 0 21 21">
<circle cx="10.5" cy="10.5" r="6.8" fill="#fff" stroke="#1a1a1a" stroke-width="1.5"/>
<circle cx="10.5" cy="10.5" r="3" fill="#1a1a1a"/>
<path d="M10.5 1 V3.7 M10.5 17.3 V20 M1 10.5 H3.7 M17.3 10.5 H20" stroke="#1a1a1a" stroke-width="1.5"/>
</svg>
<svg style="left:962px;top:423.5px;width:20px;height:20px" viewBox="0 0 20 20">
<circle cx="10" cy="10" r="8.6" fill="#fff" stroke="#1a1a1a" stroke-width="1.4"/>
<path d="M10 5 V15 M5 10 H15" stroke="#1a1a1a" stroke-width="1.6"/>
</svg>
<svg style="left:962px;top:443px;width:20px;height:20px" viewBox="0 0 20 20">
<circle cx="10" cy="10" r="8.6" fill="#fff" stroke="#1a1a1a" stroke-width="1.4"/>
<path d="M5 10 H15" stroke="#1a1a1a" stroke-width="1.6"/>
</svg>
<svg style="left:954px;top:477px;width:27px;height:33px" viewBox="0 0 27 33">
<rect x="8" y="1" width="12" height="3" rx="1.2" fill="#1b1b1b"/>
<rect x="1" y="2.5" width="25" height="3.5" fill="#1b1b1b"/>
<path d="M3.4 8 H23.9 V29.5 Q23.9 32 21.4 32 H5.9 Q3.4 32 3.4 29.5 Z" fill="#1b1b1b"/>
</svg>
</body></html>
